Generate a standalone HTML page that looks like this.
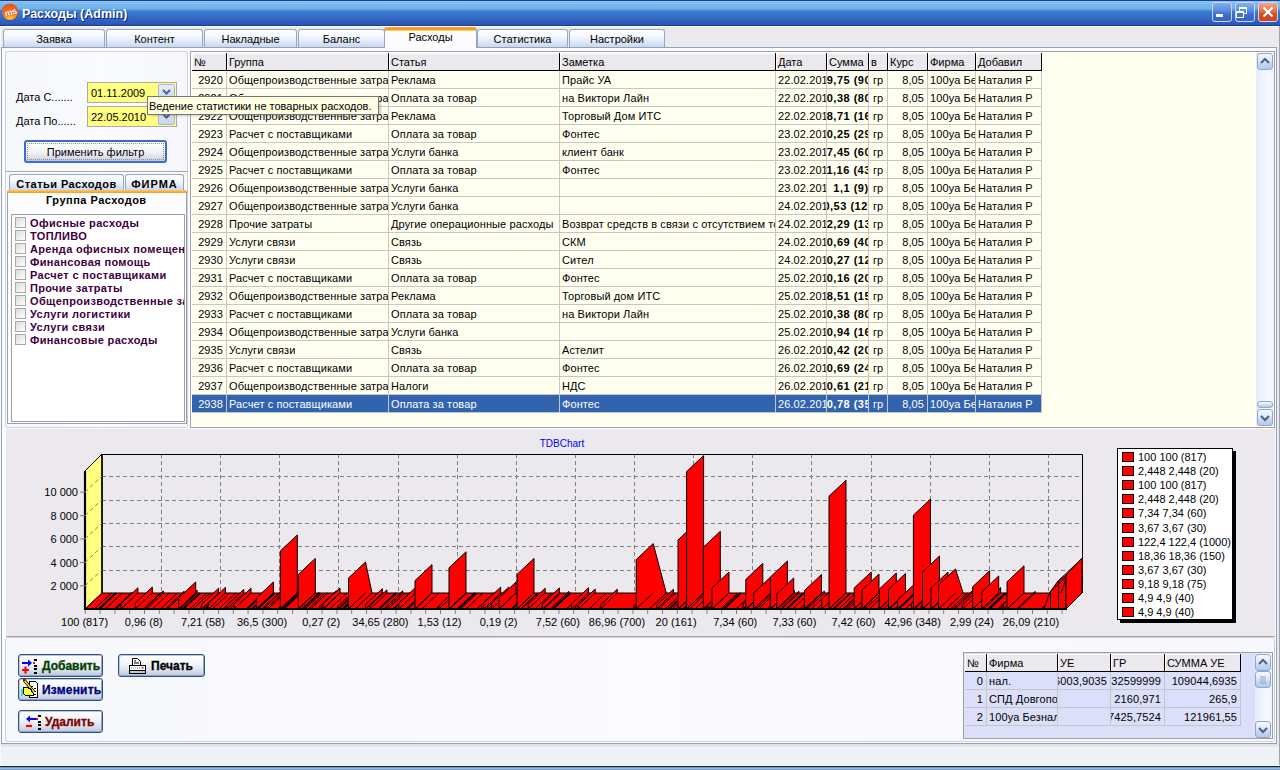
<!DOCTYPE html>
<html><head><meta charset="utf-8">
<style>
*{box-sizing:border-box;margin:0;padding:0}
html,body{width:1280px;height:770px;overflow:hidden;background:#EBE9ED;font-family:"Liberation Sans",sans-serif;font-size:11px;color:#000}
.a{position:absolute}
.t{position:absolute;white-space:pre;line-height:13px}
#title{left:0;top:0;width:1280px;height:26px;background:linear-gradient(#1E3C9E 0,#1E3C9E 1px,#9ACDF2 1px,#82C0EC 2px,#6FAEEA 9px,#5A94DE 10px,#3A7FD4 11px,#2C55B3 25px,#1C3B99 25px,#1C3B99 26px)}
.tab{position:absolute;top:29px;height:19px;border:1px solid #94A8C0;border-bottom:none;border-radius:3px 3px 0 0;background:linear-gradient(#FFFFFF,#F2F6FC 40%,#C5D5EC);text-align:center;line-height:19px}
.tabact{top:27px;height:21px;background:#FCFCFE;border-color:#94A8C0;border-top:3px solid #F3A02A;box-shadow:inset 0 1px 0 #FFC85A;line-height:15px;z-index:3}
#page{left:1px;top:47px;width:1276px;height:697px;border:1px solid #8FA3BD;background:#FCFCFE}
.btn{position:absolute;border:1px solid #3C5A8C;border-radius:3px;background:linear-gradient(#FFFFFF,#F4F4F8 50%,#D6DCE8 85%,#BFC8DA);text-align:center}
.hc{background:#EBE9ED;border-right:1px solid #000;border-bottom:1px solid #000;box-shadow:inset 1px 1px 0 #fff}
.rw{background:#FFFFF0;border-bottom:1px solid #C6C6C6}
.rw.sel{background:#3163AE;color:#fff}
.c{position:absolute;top:0;height:17px;line-height:19px;letter-spacing:0.1px;white-space:pre;overflow:hidden;padding-top:0}
.cs{display:flex;justify-content:center;font-weight:bold;letter-spacing:0.5px;padding-left:7px}
.vl{position:absolute;top:0;width:1px;height:18px;background:#C6C6C6}
.sbb{border:1px solid #8FA8D0;border-radius:3px;background:linear-gradient(#F6F9FE,#DDE8FA 45%,#C2D4F0 70%,#B6CAEA)}
.xb{border:1px solid #2F5283;border-radius:3px;box-shadow:inset 1px 1px 0 #B8C8E0,inset -1px -1px 0 #8FA4C8;background:linear-gradient(#FFFFFF,#F3F4F8 45%,#D9DFEA 75%,#B8C5DA)}
.wb{width:20px;height:20px;border:1px solid #C8D8F2;border-radius:3px;background:linear-gradient(#84B0EC,#5C8FE2 40%,#3F70D4 60%,#3563C8)}
</style></head><body>
<div id="title" class="a"></div>
<!-- app icon -->
<div class="a" style="left:2px;top:4px;width:16px;height:16px;border-radius:50%;background:radial-gradient(circle at 50% 85%,#FFD030 0,#F87020 45%,#E83A10 100%);box-shadow:0 0 1px #A03000"></div>
<svg class="a" style="left:2px;top:4px" width="16" height="16"><g transform="rotate(-15 8 8)"><text x="8.5" y="11.5" text-anchor="middle" font-size="9" font-weight="bold" font-family="Liberation Sans" fill="#fff" stroke="#D02000" stroke-width="0.6" paint-order="stroke" letter-spacing="-0.5">ms</text></g></svg>
<div class="t" style="left:22px;top:7px;font-size:12.5px;font-weight:bold;color:#fff;text-shadow:1px 1px 0 #0A1E6E;line-height:15px">Расходы (Admin)</div>
<!-- window buttons -->
<div class="a wb" style="left:1212px;top:2px"></div>
<div class="a" style="left:1216px;top:14px;width:7px;height:3px;background:#fff"></div>
<div class="a wb" style="left:1235px;top:2px"></div>
<div class="a" style="left:1239px;top:7px;width:8px;height:7px;border:1px solid #fff;border-top-width:2px"></div>
<div class="a" style="left:1236px;top:11px;width:8px;height:7px;border:1px solid #fff;border-top-width:2px;background:#3F73D8"></div>
<div class="a wb" style="left:1258px;top:2px;background:linear-gradient(#F3A488,#E8704A 45%,#D94F22 60%,#D04418)"></div>
<svg class="a" style="left:1258px;top:2px" width="20" height="20"><path d="M5.5 5.5L14.5 14.5M14.5 5.5L5.5 14.5" stroke="#fff" stroke-width="2.2"/></svg>
<div class="a" style="left:0;top:26px;width:1280px;height:1px;background:#fff"></div>

<!-- tabs -->
<div class="tab" style="left:3px;width:102px">Заявка</div>
<div class="tab" style="left:106px;width:97px">Контент</div>
<div class="tab" style="left:204px;width:93px">Накладные</div>
<div class="tab" style="left:298px;width:87px">Баланс</div>
<div class="tab" style="left:477px;width:91px">Статистика</div>
<div class="tab" style="left:569px;width:96px">Настройки</div>

<div id="page" class="a"></div>
<div class="tab tabact" style="left:384px;width:93px">Расходы</div>

<!-- left panel -->
<div class="a" style="left:5px;top:51px;width:183px;height:377px;border:1px solid #D2D2D6;border-radius:3px;background:linear-gradient(90deg,#F7F8FC,#FBFBFE 50%,#F7F8FC)"></div>
<div class="a" style="left:5px;top:51px;width:183px;height:121px;border:1px solid #D2D2D6;border-bottom-color:#A9A9AD;border-radius:3px 3px 0 0;background:linear-gradient(90deg,#F6F7FB,#FAFBFE 50%,#F6F7FB)"></div>
<div class="t" style="left:16px;top:91px">Дата С.......</div>
<div class="t" style="left:16px;top:115px">Дата По......</div>
<div class="a" style="left:87px;top:82px;width:90px;height:21px;border:1px solid #A9A9AD;background:#FFFF80"></div>
<div class="t" style="left:91px;top:87px">01.11.2009</div>
<div class="a" style="left:158px;top:84px;width:17px;height:17px;border:1px solid #A4B8DC;border-radius:2px;background:linear-gradient(#E6EEFC,#C4D4EE)"></div>
<svg class="a" style="left:158px;top:84px" width="17" height="17"><path d="M5 6L8.5 9.5L12 6" stroke="#4D6185" stroke-width="2" fill="none"/></svg>
<div class="a" style="left:87px;top:106px;width:90px;height:21px;border:1px solid #A9A9AD;background:#FFFF80"></div>
<div class="t" style="left:91px;top:111px">22.05.2010</div>
<div class="a" style="left:158px;top:108px;width:17px;height:17px;border:1px solid #A4B8DC;border-radius:2px;background:linear-gradient(#E6EEFC,#C4D4EE)"></div>
<svg class="a" style="left:158px;top:108px" width="17" height="17"><path d="M5 6L8.5 9.5L12 6" stroke="#4D6185" stroke-width="2" fill="none"/></svg>
<div class="btn" style="left:24px;top:140px;width:143px;height:23px;border:2px solid #3D6BC8;line-height:21px">Применить фильтр</div>
<div class="a" style="left:27px;top:143px;width:137px;height:17px;border:1px dotted #9C8F6A"></div>

<!-- sub tabs -->
<div class="tab" style="left:9px;top:174px;width:115px;height:17px;font-weight:bold;letter-spacing:0.45px;line-height:19px">Статьи Расходов</div>
<div class="tab" style="left:125px;top:174px;width:59px;height:17px;font-weight:bold;letter-spacing:1px;line-height:19px">ФИРМА</div>
<div class="a" style="left:7px;top:191px;width:180px;height:233px;border:1px solid #8FA3BD;border-top:none;background:#FCFCFE"></div>
<div class="a" style="left:7px;top:190px;width:181px;height:3px;background:linear-gradient(#FFC860,#F29A22);border-radius:2px 3px 0 0"></div>
<div class="t" style="left:46px;top:194px;font-weight:bold;letter-spacing:0.5px">Группа Расходов</div>
<div class="a" style="left:11px;top:214px;width:174px;height:208px;border:1px solid #A0A0A4;background:#fff;overflow:hidden">
 <div id="chk" class="a" style="left:0;top:0;width:172px"><div class="a" style="left:3px;top:2px;width:11px;height:11px;border:1px solid #A8A8A8;background:linear-gradient(135deg,#DCDCD8,#F4F4F2 70%,#FFFFFF)"></div><div class="t" style="left:18px;top:2px;font-weight:bold;color:#3D0040;letter-spacing:0.35px">Офисные расходы</div>
<div class="a" style="left:3px;top:15px;width:11px;height:11px;border:1px solid #A8A8A8;background:linear-gradient(135deg,#DCDCD8,#F4F4F2 70%,#FFFFFF)"></div><div class="t" style="left:18px;top:15px;font-weight:bold;color:#3D0040;letter-spacing:0.35px">ТОПЛИВО</div>
<div class="a" style="left:3px;top:28px;width:11px;height:11px;border:1px solid #A8A8A8;background:linear-gradient(135deg,#DCDCD8,#F4F4F2 70%,#FFFFFF)"></div><div class="t" style="left:18px;top:28px;font-weight:bold;color:#3D0040;letter-spacing:0.35px">Аренда офисных помещений</div>
<div class="a" style="left:3px;top:41px;width:11px;height:11px;border:1px solid #A8A8A8;background:linear-gradient(135deg,#DCDCD8,#F4F4F2 70%,#FFFFFF)"></div><div class="t" style="left:18px;top:41px;font-weight:bold;color:#3D0040;letter-spacing:0.35px">Финансовая помощь</div>
<div class="a" style="left:3px;top:54px;width:11px;height:11px;border:1px solid #A8A8A8;background:linear-gradient(135deg,#DCDCD8,#F4F4F2 70%,#FFFFFF)"></div><div class="t" style="left:18px;top:54px;font-weight:bold;color:#3D0040;letter-spacing:0.35px">Расчет с поставщиками</div>
<div class="a" style="left:3px;top:67px;width:11px;height:11px;border:1px solid #A8A8A8;background:linear-gradient(135deg,#DCDCD8,#F4F4F2 70%,#FFFFFF)"></div><div class="t" style="left:18px;top:67px;font-weight:bold;color:#3D0040;letter-spacing:0.35px">Прочие затраты</div>
<div class="a" style="left:3px;top:80px;width:11px;height:11px;border:1px solid #A8A8A8;background:linear-gradient(135deg,#DCDCD8,#F4F4F2 70%,#FFFFFF)"></div><div class="t" style="left:18px;top:80px;font-weight:bold;color:#3D0040;letter-spacing:0.35px">Общепроизводственные затраты</div>
<div class="a" style="left:3px;top:93px;width:11px;height:11px;border:1px solid #A8A8A8;background:linear-gradient(135deg,#DCDCD8,#F4F4F2 70%,#FFFFFF)"></div><div class="t" style="left:18px;top:93px;font-weight:bold;color:#3D0040;letter-spacing:0.35px">Услуги логистики</div>
<div class="a" style="left:3px;top:106px;width:11px;height:11px;border:1px solid #A8A8A8;background:linear-gradient(135deg,#DCDCD8,#F4F4F2 70%,#FFFFFF)"></div><div class="t" style="left:18px;top:106px;font-weight:bold;color:#3D0040;letter-spacing:0.35px">Услуги связи</div>
<div class="a" style="left:3px;top:119px;width:11px;height:11px;border:1px solid #A8A8A8;background:linear-gradient(135deg,#DCDCD8,#F4F4F2 70%,#FFFFFF)"></div><div class="t" style="left:18px;top:119px;font-weight:bold;color:#3D0040;letter-spacing:0.35px">Финансовые расходы</div>
</div>
</div>


<!-- main grid -->
<div class="a" style="left:190px;top:51px;width:1085px;height:377px;border:1px solid #A0A0A4;background:#FFFFF0;overflow:hidden">
<div class="a" style="left:0;top:0;width:1083px;height:1px;background:#fff"></div>
<div class="a" style="left:0;top:0;width:1px;height:375px;background:#fff"></div>
<div class="a" style="left:0;top:374px;width:1083px;height:1px;background:#fff"></div>
<!--GRID-->
<div class="a hc" style="left:1px;top:1px;width:35px;height:18px"><span class="t" style="left:2px;top:3px">№</span></div>
<div class="a hc" style="left:36px;top:1px;width:162px;height:18px"><span class="t" style="left:2px;top:3px">Группа</span></div>
<div class="a hc" style="left:198px;top:1px;width:171px;height:18px"><span class="t" style="left:2px;top:3px">Статья</span></div>
<div class="a hc" style="left:369px;top:1px;width:216px;height:18px"><span class="t" style="left:2px;top:3px">Заметка</span></div>
<div class="a hc" style="left:585px;top:1px;width:51px;height:18px"><span class="t" style="left:2px;top:3px">Дата</span></div>
<div class="a hc" style="left:636px;top:1px;width:42px;height:18px"><span class="t" style="left:2px;top:3px">Сумма</span></div>
<div class="a hc" style="left:678px;top:1px;width:19px;height:18px"><span class="t" style="left:2px;top:3px">в</span></div>
<div class="a hc" style="left:697px;top:1px;width:40px;height:18px"><span class="t" style="left:2px;top:3px">Курс</span></div>
<div class="a hc" style="left:737px;top:1px;width:48px;height:18px"><span class="t" style="left:2px;top:3px">Фирма</span></div>
<div class="a hc" style="left:785px;top:1px;width:66px;height:18px"><span class="t" style="left:2px;top:3px">Добавил</span></div>
<div class="a rw" style="left:1px;top:19px;width:850px;height:18px">
<div class="c" style="left:0px;width:34px;text-align:right;padding-right:3px">2920</div>
<div class="vl" style="left:34px"></div>
<div class="c" style="left:35px;width:161px;padding-left:2px">Общепроизводственные затраты</div>
<div class="vl" style="left:196px"></div>
<div class="c" style="left:197px;width:170px;padding-left:2px">Реклама</div>
<div class="vl" style="left:367px"></div>
<div class="c" style="left:368px;width:215px;padding-left:2px">Прайс УА</div>
<div class="vl" style="left:583px"></div>
<div class="c" style="left:584px;width:50px;padding-left:2px">22.02.2010</div>
<div class="vl" style="left:634px"></div>
<div class="c cs" style="left:635px;width:41px">19,75 (900)</div>
<div class="vl" style="left:676px"></div>
<div class="c" style="left:677px;width:18px;padding-left:4px">гр</div>
<div class="vl" style="left:695px"></div>
<div class="c" style="left:696px;width:39px;text-align:right;padding-right:3px">8,05</div>
<div class="vl" style="left:735px"></div>
<div class="c" style="left:736px;width:47px;padding-left:2px">100уа Безнал</div>
<div class="vl" style="left:783px"></div>
<div class="c" style="left:784px;width:65px;padding-left:2px">Наталия Р</div>
<div class="vl" style="left:849px"></div>
</div>
<div class="a rw" style="left:1px;top:37px;width:850px;height:18px">
<div class="c" style="left:0px;width:34px;text-align:right;padding-right:3px">2921</div>
<div class="vl" style="left:34px"></div>
<div class="c" style="left:35px;width:161px;padding-left:2px">Общепроизводственные затраты</div>
<div class="vl" style="left:196px"></div>
<div class="c" style="left:197px;width:170px;padding-left:2px">Оплата за товар</div>
<div class="vl" style="left:367px"></div>
<div class="c" style="left:368px;width:215px;padding-left:2px">на Виктори Лайн</div>
<div class="vl" style="left:583px"></div>
<div class="c" style="left:584px;width:50px;padding-left:2px">22.02.2010</div>
<div class="vl" style="left:634px"></div>
<div class="c cs" style="left:635px;width:41px">10,38 (800)</div>
<div class="vl" style="left:676px"></div>
<div class="c" style="left:677px;width:18px;padding-left:4px">гр</div>
<div class="vl" style="left:695px"></div>
<div class="c" style="left:696px;width:39px;text-align:right;padding-right:3px">8,05</div>
<div class="vl" style="left:735px"></div>
<div class="c" style="left:736px;width:47px;padding-left:2px">100уа Безнал</div>
<div class="vl" style="left:783px"></div>
<div class="c" style="left:784px;width:65px;padding-left:2px">Наталия Р</div>
<div class="vl" style="left:849px"></div>
</div>
<div class="a rw" style="left:1px;top:55px;width:850px;height:18px">
<div class="c" style="left:0px;width:34px;text-align:right;padding-right:3px">2922</div>
<div class="vl" style="left:34px"></div>
<div class="c" style="left:35px;width:161px;padding-left:2px">Общепроизводственные затраты</div>
<div class="vl" style="left:196px"></div>
<div class="c" style="left:197px;width:170px;padding-left:2px">Реклама</div>
<div class="vl" style="left:367px"></div>
<div class="c" style="left:368px;width:215px;padding-left:2px">Торговый Дом ИТС</div>
<div class="vl" style="left:583px"></div>
<div class="c" style="left:584px;width:50px;padding-left:2px">22.02.2010</div>
<div class="vl" style="left:634px"></div>
<div class="c cs" style="left:635px;width:41px">18,71 (160)</div>
<div class="vl" style="left:676px"></div>
<div class="c" style="left:677px;width:18px;padding-left:4px">гр</div>
<div class="vl" style="left:695px"></div>
<div class="c" style="left:696px;width:39px;text-align:right;padding-right:3px">8,05</div>
<div class="vl" style="left:735px"></div>
<div class="c" style="left:736px;width:47px;padding-left:2px">100уа Безнал</div>
<div class="vl" style="left:783px"></div>
<div class="c" style="left:784px;width:65px;padding-left:2px">Наталия Р</div>
<div class="vl" style="left:849px"></div>
</div>
<div class="a rw" style="left:1px;top:73px;width:850px;height:18px">
<div class="c" style="left:0px;width:34px;text-align:right;padding-right:3px">2923</div>
<div class="vl" style="left:34px"></div>
<div class="c" style="left:35px;width:161px;padding-left:2px">Расчет с поставщиками</div>
<div class="vl" style="left:196px"></div>
<div class="c" style="left:197px;width:170px;padding-left:2px">Оплата за товар</div>
<div class="vl" style="left:367px"></div>
<div class="c" style="left:368px;width:215px;padding-left:2px">Фонтес</div>
<div class="vl" style="left:583px"></div>
<div class="c" style="left:584px;width:50px;padding-left:2px">23.02.2010</div>
<div class="vl" style="left:634px"></div>
<div class="c cs" style="left:635px;width:41px">10,25 (290)</div>
<div class="vl" style="left:676px"></div>
<div class="c" style="left:677px;width:18px;padding-left:4px">гр</div>
<div class="vl" style="left:695px"></div>
<div class="c" style="left:696px;width:39px;text-align:right;padding-right:3px">8,05</div>
<div class="vl" style="left:735px"></div>
<div class="c" style="left:736px;width:47px;padding-left:2px">100уа Безнал</div>
<div class="vl" style="left:783px"></div>
<div class="c" style="left:784px;width:65px;padding-left:2px">Наталия Р</div>
<div class="vl" style="left:849px"></div>
</div>
<div class="a rw" style="left:1px;top:91px;width:850px;height:18px">
<div class="c" style="left:0px;width:34px;text-align:right;padding-right:3px">2924</div>
<div class="vl" style="left:34px"></div>
<div class="c" style="left:35px;width:161px;padding-left:2px">Общепроизводственные затраты</div>
<div class="vl" style="left:196px"></div>
<div class="c" style="left:197px;width:170px;padding-left:2px">Услуги банка</div>
<div class="vl" style="left:367px"></div>
<div class="c" style="left:368px;width:215px;padding-left:2px">клиент банк</div>
<div class="vl" style="left:583px"></div>
<div class="c" style="left:584px;width:50px;padding-left:2px">23.02.2010</div>
<div class="vl" style="left:634px"></div>
<div class="c cs" style="left:635px;width:41px">77,45 (600)</div>
<div class="vl" style="left:676px"></div>
<div class="c" style="left:677px;width:18px;padding-left:4px">гр</div>
<div class="vl" style="left:695px"></div>
<div class="c" style="left:696px;width:39px;text-align:right;padding-right:3px">8,05</div>
<div class="vl" style="left:735px"></div>
<div class="c" style="left:736px;width:47px;padding-left:2px">100уа Безнал</div>
<div class="vl" style="left:783px"></div>
<div class="c" style="left:784px;width:65px;padding-left:2px">Наталия Р</div>
<div class="vl" style="left:849px"></div>
</div>
<div class="a rw" style="left:1px;top:109px;width:850px;height:18px">
<div class="c" style="left:0px;width:34px;text-align:right;padding-right:3px">2925</div>
<div class="vl" style="left:34px"></div>
<div class="c" style="left:35px;width:161px;padding-left:2px">Расчет с поставщиками</div>
<div class="vl" style="left:196px"></div>
<div class="c" style="left:197px;width:170px;padding-left:2px">Оплата за товар</div>
<div class="vl" style="left:367px"></div>
<div class="c" style="left:368px;width:215px;padding-left:2px">Фонтес</div>
<div class="vl" style="left:583px"></div>
<div class="c" style="left:584px;width:50px;padding-left:2px">23.02.2010</div>
<div class="vl" style="left:634px"></div>
<div class="c cs" style="left:635px;width:41px">11,16 (430)</div>
<div class="vl" style="left:676px"></div>
<div class="c" style="left:677px;width:18px;padding-left:4px">гр</div>
<div class="vl" style="left:695px"></div>
<div class="c" style="left:696px;width:39px;text-align:right;padding-right:3px">8,05</div>
<div class="vl" style="left:735px"></div>
<div class="c" style="left:736px;width:47px;padding-left:2px">100уа Безнал</div>
<div class="vl" style="left:783px"></div>
<div class="c" style="left:784px;width:65px;padding-left:2px">Наталия Р</div>
<div class="vl" style="left:849px"></div>
</div>
<div class="a rw" style="left:1px;top:127px;width:850px;height:18px">
<div class="c" style="left:0px;width:34px;text-align:right;padding-right:3px">2926</div>
<div class="vl" style="left:34px"></div>
<div class="c" style="left:35px;width:161px;padding-left:2px">Общепроизводственные затраты</div>
<div class="vl" style="left:196px"></div>
<div class="c" style="left:197px;width:170px;padding-left:2px">Услуги банка</div>
<div class="vl" style="left:367px"></div>
<div class="c" style="left:368px;width:215px;padding-left:2px"></div>
<div class="vl" style="left:583px"></div>
<div class="c" style="left:584px;width:50px;padding-left:2px">23.02.2010</div>
<div class="vl" style="left:634px"></div>
<div class="c cs" style="left:635px;width:41px">1,1 (9)</div>
<div class="vl" style="left:676px"></div>
<div class="c" style="left:677px;width:18px;padding-left:4px">гр</div>
<div class="vl" style="left:695px"></div>
<div class="c" style="left:696px;width:39px;text-align:right;padding-right:3px">8,05</div>
<div class="vl" style="left:735px"></div>
<div class="c" style="left:736px;width:47px;padding-left:2px">100уа Безнал</div>
<div class="vl" style="left:783px"></div>
<div class="c" style="left:784px;width:65px;padding-left:2px">Наталия Р</div>
<div class="vl" style="left:849px"></div>
</div>
<div class="a rw" style="left:1px;top:145px;width:850px;height:18px">
<div class="c" style="left:0px;width:34px;text-align:right;padding-right:3px">2927</div>
<div class="vl" style="left:34px"></div>
<div class="c" style="left:35px;width:161px;padding-left:2px">Общепроизводственные затраты</div>
<div class="vl" style="left:196px"></div>
<div class="c" style="left:197px;width:170px;padding-left:2px">Услуги банка</div>
<div class="vl" style="left:367px"></div>
<div class="c" style="left:368px;width:215px;padding-left:2px"></div>
<div class="vl" style="left:583px"></div>
<div class="c" style="left:584px;width:50px;padding-left:2px">24.02.2010</div>
<div class="vl" style="left:634px"></div>
<div class="c cs" style="left:635px;width:41px">0,53 (120)</div>
<div class="vl" style="left:676px"></div>
<div class="c" style="left:677px;width:18px;padding-left:4px">гр</div>
<div class="vl" style="left:695px"></div>
<div class="c" style="left:696px;width:39px;text-align:right;padding-right:3px">8,05</div>
<div class="vl" style="left:735px"></div>
<div class="c" style="left:736px;width:47px;padding-left:2px">100уа Безнал</div>
<div class="vl" style="left:783px"></div>
<div class="c" style="left:784px;width:65px;padding-left:2px">Наталия Р</div>
<div class="vl" style="left:849px"></div>
</div>
<div class="a rw" style="left:1px;top:163px;width:850px;height:18px">
<div class="c" style="left:0px;width:34px;text-align:right;padding-right:3px">2928</div>
<div class="vl" style="left:34px"></div>
<div class="c" style="left:35px;width:161px;padding-left:2px">Прочие затраты</div>
<div class="vl" style="left:196px"></div>
<div class="c" style="left:197px;width:170px;padding-left:2px">Другие операционные расходы</div>
<div class="vl" style="left:367px"></div>
<div class="c" style="left:368px;width:215px;padding-left:2px">Возврат средств в связи с отсутствием товара</div>
<div class="vl" style="left:583px"></div>
<div class="c" style="left:584px;width:50px;padding-left:2px">24.02.2010</div>
<div class="vl" style="left:634px"></div>
<div class="c cs" style="left:635px;width:41px">12,29 (130)</div>
<div class="vl" style="left:676px"></div>
<div class="c" style="left:677px;width:18px;padding-left:4px">гр</div>
<div class="vl" style="left:695px"></div>
<div class="c" style="left:696px;width:39px;text-align:right;padding-right:3px">8,05</div>
<div class="vl" style="left:735px"></div>
<div class="c" style="left:736px;width:47px;padding-left:2px">100уа Безнал</div>
<div class="vl" style="left:783px"></div>
<div class="c" style="left:784px;width:65px;padding-left:2px">Наталия Р</div>
<div class="vl" style="left:849px"></div>
</div>
<div class="a rw" style="left:1px;top:181px;width:850px;height:18px">
<div class="c" style="left:0px;width:34px;text-align:right;padding-right:3px">2929</div>
<div class="vl" style="left:34px"></div>
<div class="c" style="left:35px;width:161px;padding-left:2px">Услуги связи</div>
<div class="vl" style="left:196px"></div>
<div class="c" style="left:197px;width:170px;padding-left:2px">Связь</div>
<div class="vl" style="left:367px"></div>
<div class="c" style="left:368px;width:215px;padding-left:2px">СКМ</div>
<div class="vl" style="left:583px"></div>
<div class="c" style="left:584px;width:50px;padding-left:2px">24.02.2010</div>
<div class="vl" style="left:634px"></div>
<div class="c cs" style="left:635px;width:41px">10,69 (400)</div>
<div class="vl" style="left:676px"></div>
<div class="c" style="left:677px;width:18px;padding-left:4px">гр</div>
<div class="vl" style="left:695px"></div>
<div class="c" style="left:696px;width:39px;text-align:right;padding-right:3px">8,05</div>
<div class="vl" style="left:735px"></div>
<div class="c" style="left:736px;width:47px;padding-left:2px">100уа Безнал</div>
<div class="vl" style="left:783px"></div>
<div class="c" style="left:784px;width:65px;padding-left:2px">Наталия Р</div>
<div class="vl" style="left:849px"></div>
</div>
<div class="a rw" style="left:1px;top:199px;width:850px;height:18px">
<div class="c" style="left:0px;width:34px;text-align:right;padding-right:3px">2930</div>
<div class="vl" style="left:34px"></div>
<div class="c" style="left:35px;width:161px;padding-left:2px">Услуги связи</div>
<div class="vl" style="left:196px"></div>
<div class="c" style="left:197px;width:170px;padding-left:2px">Связь</div>
<div class="vl" style="left:367px"></div>
<div class="c" style="left:368px;width:215px;padding-left:2px">Сител</div>
<div class="vl" style="left:583px"></div>
<div class="c" style="left:584px;width:50px;padding-left:2px">24.02.2010</div>
<div class="vl" style="left:634px"></div>
<div class="c cs" style="left:635px;width:41px">10,27 (120)</div>
<div class="vl" style="left:676px"></div>
<div class="c" style="left:677px;width:18px;padding-left:4px">гр</div>
<div class="vl" style="left:695px"></div>
<div class="c" style="left:696px;width:39px;text-align:right;padding-right:3px">8,05</div>
<div class="vl" style="left:735px"></div>
<div class="c" style="left:736px;width:47px;padding-left:2px">100уа Безнал</div>
<div class="vl" style="left:783px"></div>
<div class="c" style="left:784px;width:65px;padding-left:2px">Наталия Р</div>
<div class="vl" style="left:849px"></div>
</div>
<div class="a rw" style="left:1px;top:217px;width:850px;height:18px">
<div class="c" style="left:0px;width:34px;text-align:right;padding-right:3px">2931</div>
<div class="vl" style="left:34px"></div>
<div class="c" style="left:35px;width:161px;padding-left:2px">Расчет с поставщиками</div>
<div class="vl" style="left:196px"></div>
<div class="c" style="left:197px;width:170px;padding-left:2px">Оплата за товар</div>
<div class="vl" style="left:367px"></div>
<div class="c" style="left:368px;width:215px;padding-left:2px">Фонтес</div>
<div class="vl" style="left:583px"></div>
<div class="c" style="left:584px;width:50px;padding-left:2px">25.02.2010</div>
<div class="vl" style="left:634px"></div>
<div class="c cs" style="left:635px;width:41px">10,16 (200)</div>
<div class="vl" style="left:676px"></div>
<div class="c" style="left:677px;width:18px;padding-left:4px">гр</div>
<div class="vl" style="left:695px"></div>
<div class="c" style="left:696px;width:39px;text-align:right;padding-right:3px">8,05</div>
<div class="vl" style="left:735px"></div>
<div class="c" style="left:736px;width:47px;padding-left:2px">100уа Безнал</div>
<div class="vl" style="left:783px"></div>
<div class="c" style="left:784px;width:65px;padding-left:2px">Наталия Р</div>
<div class="vl" style="left:849px"></div>
</div>
<div class="a rw" style="left:1px;top:235px;width:850px;height:18px">
<div class="c" style="left:0px;width:34px;text-align:right;padding-right:3px">2932</div>
<div class="vl" style="left:34px"></div>
<div class="c" style="left:35px;width:161px;padding-left:2px">Общепроизводственные затраты</div>
<div class="vl" style="left:196px"></div>
<div class="c" style="left:197px;width:170px;padding-left:2px">Реклама</div>
<div class="vl" style="left:367px"></div>
<div class="c" style="left:368px;width:215px;padding-left:2px">Торговый дом ИТС</div>
<div class="vl" style="left:583px"></div>
<div class="c" style="left:584px;width:50px;padding-left:2px">25.02.2010</div>
<div class="vl" style="left:634px"></div>
<div class="c cs" style="left:635px;width:41px">18,51 (150)</div>
<div class="vl" style="left:676px"></div>
<div class="c" style="left:677px;width:18px;padding-left:4px">гр</div>
<div class="vl" style="left:695px"></div>
<div class="c" style="left:696px;width:39px;text-align:right;padding-right:3px">8,05</div>
<div class="vl" style="left:735px"></div>
<div class="c" style="left:736px;width:47px;padding-left:2px">100уа Безнал</div>
<div class="vl" style="left:783px"></div>
<div class="c" style="left:784px;width:65px;padding-left:2px">Наталия Р</div>
<div class="vl" style="left:849px"></div>
</div>
<div class="a rw" style="left:1px;top:253px;width:850px;height:18px">
<div class="c" style="left:0px;width:34px;text-align:right;padding-right:3px">2933</div>
<div class="vl" style="left:34px"></div>
<div class="c" style="left:35px;width:161px;padding-left:2px">Расчет с поставщиками</div>
<div class="vl" style="left:196px"></div>
<div class="c" style="left:197px;width:170px;padding-left:2px">Оплата за товар</div>
<div class="vl" style="left:367px"></div>
<div class="c" style="left:368px;width:215px;padding-left:2px">на Виктори Лайн</div>
<div class="vl" style="left:583px"></div>
<div class="c" style="left:584px;width:50px;padding-left:2px">25.02.2010</div>
<div class="vl" style="left:634px"></div>
<div class="c cs" style="left:635px;width:41px">10,38 (800)</div>
<div class="vl" style="left:676px"></div>
<div class="c" style="left:677px;width:18px;padding-left:4px">гр</div>
<div class="vl" style="left:695px"></div>
<div class="c" style="left:696px;width:39px;text-align:right;padding-right:3px">8,05</div>
<div class="vl" style="left:735px"></div>
<div class="c" style="left:736px;width:47px;padding-left:2px">100уа Безнал</div>
<div class="vl" style="left:783px"></div>
<div class="c" style="left:784px;width:65px;padding-left:2px">Наталия Р</div>
<div class="vl" style="left:849px"></div>
</div>
<div class="a rw" style="left:1px;top:271px;width:850px;height:18px">
<div class="c" style="left:0px;width:34px;text-align:right;padding-right:3px">2934</div>
<div class="vl" style="left:34px"></div>
<div class="c" style="left:35px;width:161px;padding-left:2px">Общепроизводственные затраты</div>
<div class="vl" style="left:196px"></div>
<div class="c" style="left:197px;width:170px;padding-left:2px">Услуги банка</div>
<div class="vl" style="left:367px"></div>
<div class="c" style="left:368px;width:215px;padding-left:2px"></div>
<div class="vl" style="left:583px"></div>
<div class="c" style="left:584px;width:50px;padding-left:2px">25.02.2010</div>
<div class="vl" style="left:634px"></div>
<div class="c cs" style="left:635px;width:41px">10,94 (160)</div>
<div class="vl" style="left:676px"></div>
<div class="c" style="left:677px;width:18px;padding-left:4px">гр</div>
<div class="vl" style="left:695px"></div>
<div class="c" style="left:696px;width:39px;text-align:right;padding-right:3px">8,05</div>
<div class="vl" style="left:735px"></div>
<div class="c" style="left:736px;width:47px;padding-left:2px">100уа Безнал</div>
<div class="vl" style="left:783px"></div>
<div class="c" style="left:784px;width:65px;padding-left:2px">Наталия Р</div>
<div class="vl" style="left:849px"></div>
</div>
<div class="a rw" style="left:1px;top:289px;width:850px;height:18px">
<div class="c" style="left:0px;width:34px;text-align:right;padding-right:3px">2935</div>
<div class="vl" style="left:34px"></div>
<div class="c" style="left:35px;width:161px;padding-left:2px">Услуги связи</div>
<div class="vl" style="left:196px"></div>
<div class="c" style="left:197px;width:170px;padding-left:2px">Связь</div>
<div class="vl" style="left:367px"></div>
<div class="c" style="left:368px;width:215px;padding-left:2px">Астелит</div>
<div class="vl" style="left:583px"></div>
<div class="c" style="left:584px;width:50px;padding-left:2px">26.02.2010</div>
<div class="vl" style="left:634px"></div>
<div class="c cs" style="left:635px;width:41px">10,42 (200)</div>
<div class="vl" style="left:676px"></div>
<div class="c" style="left:677px;width:18px;padding-left:4px">гр</div>
<div class="vl" style="left:695px"></div>
<div class="c" style="left:696px;width:39px;text-align:right;padding-right:3px">8,05</div>
<div class="vl" style="left:735px"></div>
<div class="c" style="left:736px;width:47px;padding-left:2px">100уа Безнал</div>
<div class="vl" style="left:783px"></div>
<div class="c" style="left:784px;width:65px;padding-left:2px">Наталия Р</div>
<div class="vl" style="left:849px"></div>
</div>
<div class="a rw" style="left:1px;top:307px;width:850px;height:18px">
<div class="c" style="left:0px;width:34px;text-align:right;padding-right:3px">2936</div>
<div class="vl" style="left:34px"></div>
<div class="c" style="left:35px;width:161px;padding-left:2px">Расчет с поставщиками</div>
<div class="vl" style="left:196px"></div>
<div class="c" style="left:197px;width:170px;padding-left:2px">Оплата за товар</div>
<div class="vl" style="left:367px"></div>
<div class="c" style="left:368px;width:215px;padding-left:2px">Фонтес</div>
<div class="vl" style="left:583px"></div>
<div class="c" style="left:584px;width:50px;padding-left:2px">26.02.2010</div>
<div class="vl" style="left:634px"></div>
<div class="c cs" style="left:635px;width:41px">10,69 (240)</div>
<div class="vl" style="left:676px"></div>
<div class="c" style="left:677px;width:18px;padding-left:4px">гр</div>
<div class="vl" style="left:695px"></div>
<div class="c" style="left:696px;width:39px;text-align:right;padding-right:3px">8,05</div>
<div class="vl" style="left:735px"></div>
<div class="c" style="left:736px;width:47px;padding-left:2px">100уа Безнал</div>
<div class="vl" style="left:783px"></div>
<div class="c" style="left:784px;width:65px;padding-left:2px">Наталия Р</div>
<div class="vl" style="left:849px"></div>
</div>
<div class="a rw" style="left:1px;top:325px;width:850px;height:18px">
<div class="c" style="left:0px;width:34px;text-align:right;padding-right:3px">2937</div>
<div class="vl" style="left:34px"></div>
<div class="c" style="left:35px;width:161px;padding-left:2px">Общепроизводственные затраты</div>
<div class="vl" style="left:196px"></div>
<div class="c" style="left:197px;width:170px;padding-left:2px">Налоги</div>
<div class="vl" style="left:367px"></div>
<div class="c" style="left:368px;width:215px;padding-left:2px">НДС</div>
<div class="vl" style="left:583px"></div>
<div class="c" style="left:584px;width:50px;padding-left:2px">26.02.2010</div>
<div class="vl" style="left:634px"></div>
<div class="c cs" style="left:635px;width:41px">10,61 (210)</div>
<div class="vl" style="left:676px"></div>
<div class="c" style="left:677px;width:18px;padding-left:4px">гр</div>
<div class="vl" style="left:695px"></div>
<div class="c" style="left:696px;width:39px;text-align:right;padding-right:3px">8,05</div>
<div class="vl" style="left:735px"></div>
<div class="c" style="left:736px;width:47px;padding-left:2px">100уа Безнал</div>
<div class="vl" style="left:783px"></div>
<div class="c" style="left:784px;width:65px;padding-left:2px">Наталия Р</div>
<div class="vl" style="left:849px"></div>
</div>
<div class="a rw sel" style="left:1px;top:343px;width:850px;height:18px">
<div class="c" style="left:0px;width:34px;text-align:right;padding-right:3px">2938</div>
<div class="vl" style="left:34px"></div>
<div class="c" style="left:35px;width:161px;padding-left:2px">Расчет с поставщиками</div>
<div class="vl" style="left:196px"></div>
<div class="c" style="left:197px;width:170px;padding-left:2px">Оплата за товар</div>
<div class="vl" style="left:367px"></div>
<div class="c" style="left:368px;width:215px;padding-left:2px">Фонтес</div>
<div class="vl" style="left:583px"></div>
<div class="c" style="left:584px;width:50px;padding-left:2px">26.02.2010</div>
<div class="vl" style="left:634px"></div>
<div class="c cs" style="left:635px;width:41px">10,78 (350)</div>
<div class="vl" style="left:676px"></div>
<div class="c" style="left:677px;width:18px;padding-left:4px">гр</div>
<div class="vl" style="left:695px"></div>
<div class="c" style="left:696px;width:39px;text-align:right;padding-right:3px">8,05</div>
<div class="vl" style="left:735px"></div>
<div class="c" style="left:736px;width:47px;padding-left:2px">100уа Безнал</div>
<div class="vl" style="left:783px"></div>
<div class="c" style="left:784px;width:65px;padding-left:2px">Наталия Р</div>
<div class="vl" style="left:849px"></div>
</div>
<!--/GRID-->
</div>

<!-- grid scrollbar -->
<div class="a" style="left:1256px;top:53px;width:18px;height:373px;background:linear-gradient(90deg,#E4EDFB,#F6F9FE 70%,#F0F4FC)"></div>
<div class="a sbb" style="left:1257px;top:53px;width:16px;height:17px"></div>
<svg class="a" style="left:1257px;top:53px" width="16" height="17"><path d="M4 10L8 6L12 10" stroke="#4D6185" stroke-width="2" fill="none"/></svg>
<div class="a sbb" style="left:1257px;top:401px;width:16px;height:7px"></div>
<div class="a sbb" style="left:1257px;top:409px;width:16px;height:17px"></div>
<svg class="a" style="left:1257px;top:409px" width="16" height="17"><path d="M4 7L8 11L12 7" stroke="#4D6185" stroke-width="2" fill="none"/></svg>

<!-- tooltip -->
<div class="a" style="left:149px;top:98px;width:232px;height:18px;background:rgba(0,0,0,0.18);filter:blur(1px)"></div>
<div class="a" style="left:147px;top:96px;width:232px;height:19px;border:1px solid #767676;background:#FFFFE1"></div>
<div class="t" style="left:149px;top:100px">Ведение статистики не товарных расходов.</div>

<!-- chart panel -->
<div class="a" style="left:6px;top:429px;width:1269px;height:208px;background:#EBE9ED;border-bottom:1px solid #A5A5A9"></div>
<!--CHART-->
<svg class="a" style="left:0;top:0" width="1280" height="770" viewBox="0 0 1280 770">
<line x1="102" y1="570.5" x2="1082" y2="570.5" stroke="#808080" stroke-dasharray="4,3" stroke-width="1"/>
<line x1="102" y1="546.5" x2="1082" y2="546.5" stroke="#808080" stroke-dasharray="4,3" stroke-width="1"/>
<line x1="102" y1="523.5" x2="1082" y2="523.5" stroke="#808080" stroke-dasharray="4,3" stroke-width="1"/>
<line x1="102" y1="500.5" x2="1082" y2="500.5" stroke="#808080" stroke-dasharray="4,3" stroke-width="1"/>
<line x1="102" y1="476.5" x2="1082" y2="476.5" stroke="#808080" stroke-dasharray="4,3" stroke-width="1"/>
<line x1="161.5" y1="454" x2="161.5" y2="593" stroke="#808080" stroke-dasharray="4,3" stroke-width="1"/>
<line x1="220.5" y1="454" x2="220.5" y2="593" stroke="#808080" stroke-dasharray="4,3" stroke-width="1"/>
<line x1="279.5" y1="454" x2="279.5" y2="593" stroke="#808080" stroke-dasharray="4,3" stroke-width="1"/>
<line x1="338.5" y1="454" x2="338.5" y2="593" stroke="#808080" stroke-dasharray="4,3" stroke-width="1"/>
<line x1="398.5" y1="454" x2="398.5" y2="593" stroke="#808080" stroke-dasharray="4,3" stroke-width="1"/>
<line x1="457.5" y1="454" x2="457.5" y2="593" stroke="#808080" stroke-dasharray="4,3" stroke-width="1"/>
<line x1="516.5" y1="454" x2="516.5" y2="593" stroke="#808080" stroke-dasharray="4,3" stroke-width="1"/>
<line x1="575.5" y1="454" x2="575.5" y2="593" stroke="#808080" stroke-dasharray="4,3" stroke-width="1"/>
<line x1="634.5" y1="454" x2="634.5" y2="593" stroke="#808080" stroke-dasharray="4,3" stroke-width="1"/>
<line x1="693.5" y1="454" x2="693.5" y2="593" stroke="#808080" stroke-dasharray="4,3" stroke-width="1"/>
<line x1="752.5" y1="454" x2="752.5" y2="593" stroke="#808080" stroke-dasharray="4,3" stroke-width="1"/>
<line x1="811.5" y1="454" x2="811.5" y2="593" stroke="#808080" stroke-dasharray="4,3" stroke-width="1"/>
<line x1="871.5" y1="454" x2="871.5" y2="593" stroke="#808080" stroke-dasharray="4,3" stroke-width="1"/>
<line x1="930.5" y1="454" x2="930.5" y2="593" stroke="#808080" stroke-dasharray="4,3" stroke-width="1"/>
<line x1="989.5" y1="454" x2="989.5" y2="593" stroke="#808080" stroke-dasharray="4,3" stroke-width="1"/>
<line x1="1048.5" y1="454" x2="1048.5" y2="593" stroke="#808080" stroke-dasharray="4,3" stroke-width="1"/>
<path d="M102 454.5H1082.5V593" stroke="#000" fill="none" stroke-width="1"/>
<polygon points="85,471 102,454 102,593 85,609" fill="#FFFF80" stroke="#000" stroke-width="1"/>
<line x1="85" y1="471" x2="85" y2="610" stroke="#000" stroke-width="2.2"/>
<line x1="102" y1="454" x2="102" y2="593" stroke="#000" stroke-width="1.5"/>
<line x1="85" y1="585.9" x2="102" y2="569.9" stroke="#808080" stroke-dasharray="4,3" stroke-width="1"/>
<line x1="80" y1="585.9" x2="85" y2="585.9" stroke="#808080" stroke-width="1"/>
<text x="78" y="589.9" text-anchor="end" font-size="11" font-family="Liberation Sans">2 000</text>
<line x1="85" y1="562.5" x2="102" y2="546.5" stroke="#808080" stroke-dasharray="4,3" stroke-width="1"/>
<line x1="80" y1="562.5" x2="85" y2="562.5" stroke="#808080" stroke-width="1"/>
<text x="78" y="566.5" text-anchor="end" font-size="11" font-family="Liberation Sans">4 000</text>
<line x1="85" y1="539.0" x2="102" y2="523.0" stroke="#808080" stroke-dasharray="4,3" stroke-width="1"/>
<line x1="80" y1="539.0" x2="85" y2="539.0" stroke="#808080" stroke-width="1"/>
<text x="78" y="543.0" text-anchor="end" font-size="11" font-family="Liberation Sans">6 000</text>
<line x1="85" y1="515.6" x2="102" y2="499.6" stroke="#808080" stroke-dasharray="4,3" stroke-width="1"/>
<line x1="80" y1="515.6" x2="85" y2="515.6" stroke="#808080" stroke-width="1"/>
<text x="78" y="519.6" text-anchor="end" font-size="11" font-family="Liberation Sans">8 000</text>
<line x1="85" y1="492.1" x2="102" y2="476.1" stroke="#808080" stroke-dasharray="4,3" stroke-width="1"/>
<line x1="80" y1="492.1" x2="85" y2="492.1" stroke="#808080" stroke-width="1"/>
<text x="78" y="496.1" text-anchor="end" font-size="11" font-family="Liberation Sans">10 000</text>
<polygon points="85,609 102,593 1082,593 1066,609" fill="#FF0000" stroke="#000" stroke-width="1"/>
<line x1="99.0" y1="609" x2="116.0" y2="593" stroke="#000" stroke-width="1.8"/>
<line x1="94.6" y1="609" x2="111.6" y2="593" stroke="#000" stroke-width="1"/>
<line x1="105.2" y1="609" x2="122.2" y2="593" stroke="#000" stroke-width="1"/>
<line x1="115.2" y1="609" x2="132.2" y2="593" stroke="#000" stroke-width="1.8"/>
<line x1="120.8" y1="609" x2="137.8" y2="593" stroke="#000" stroke-width="1"/>
<polygon points="120.9,609 120.9,603.8 137.9,587.8 137.9,593" fill="#FF0000" stroke="#000" stroke-width="1"/>
<line x1="143.4" y1="609" x2="160.4" y2="593" stroke="#000" stroke-width="1"/>
<polygon points="135.3,609 135.3,603.1 152.3,587.1 152.3,593" fill="#FF0000" stroke="#000" stroke-width="1"/>
<line x1="152.4" y1="609" x2="169.4" y2="593" stroke="#000" stroke-width="1"/>
<polygon points="146.3,609 146.3,607.0 163.3,591.0 163.3,593" fill="#FF0000" stroke="#000" stroke-width="1"/>
<line x1="167.3" y1="609" x2="184.3" y2="593" stroke="#000" stroke-width="1"/>
<line x1="160.5" y1="609" x2="177.5" y2="593" stroke="#000" stroke-width="1"/>
<polygon points="167.1,609 167.1,607.2 184.1,591.2 184.1,593" fill="#FF0000" stroke="#000" stroke-width="1"/>
<line x1="183.0" y1="609" x2="200.0" y2="593" stroke="#000" stroke-width="1.8"/>
<polygon points="180.1,609 180.1,606.1 197.1,590.1 197.1,593" fill="#FF0000" stroke="#000" stroke-width="1"/>
<line x1="202.3" y1="609" x2="219.3" y2="593" stroke="#000" stroke-width="1"/>
<line x1="193.0" y1="609" x2="210.0" y2="593" stroke="#000" stroke-width="1"/>
<line x1="198.9" y1="609" x2="215.9" y2="593" stroke="#000" stroke-width="1"/>
<line x1="189.8" y1="609" x2="206.8" y2="593" stroke="#000" stroke-width="1"/>
<polygon points="201.6,609 201.6,604.2 218.6,588.2 218.6,593" fill="#FF0000" stroke="#000" stroke-width="1"/>
<line x1="212.4" y1="609" x2="229.4" y2="593" stroke="#000" stroke-width="1"/>
<line x1="205.1" y1="609" x2="222.1" y2="593" stroke="#000" stroke-width="1.8"/>
<polygon points="208.5,609 208.5,603.3 225.5,587.3 225.5,593" fill="#FF0000" stroke="#000" stroke-width="1"/>
<line x1="218.8" y1="609" x2="235.8" y2="593" stroke="#000" stroke-width="1"/>
<line x1="229.5" y1="609" x2="246.5" y2="593" stroke="#000" stroke-width="1"/>
<line x1="223.2" y1="609" x2="240.2" y2="593" stroke="#000" stroke-width="1"/>
<polygon points="226.8,609 226.8,605.4 243.8,589.4 243.8,593" fill="#FF0000" stroke="#000" stroke-width="1"/>
<line x1="247.0" y1="609" x2="264.0" y2="593" stroke="#000" stroke-width="1.8"/>
<polygon points="234.0,609 234.0,604.2 251.0,588.2 251.0,593" fill="#FF0000" stroke="#000" stroke-width="1"/>
<line x1="257.4" y1="609" x2="274.4" y2="593" stroke="#000" stroke-width="1.8"/>
<line x1="252.0" y1="609" x2="269.0" y2="593" stroke="#000" stroke-width="1.8"/>
<line x1="262.9" y1="609" x2="279.9" y2="593" stroke="#000" stroke-width="1.8"/>
<line x1="267.9" y1="609" x2="284.9" y2="593" stroke="#000" stroke-width="1"/>
<polygon points="265.8,609 265.8,606.2 282.8,590.2 282.8,593" fill="#FF0000" stroke="#000" stroke-width="1"/>
<line x1="283.3" y1="609" x2="300.3" y2="593" stroke="#000" stroke-width="1.8"/>
<line x1="278.6" y1="609" x2="295.6" y2="593" stroke="#000" stroke-width="1.8"/>
<polygon points="281.5,609 281.5,606.9 298.5,590.9 298.5,593" fill="#FF0000" stroke="#000" stroke-width="1"/>
<line x1="305.0" y1="609" x2="322.0" y2="593" stroke="#000" stroke-width="1"/>
<line x1="302.7" y1="609" x2="319.7" y2="593" stroke="#000" stroke-width="1"/>
<line x1="302.3" y1="609" x2="319.3" y2="593" stroke="#000" stroke-width="1.8"/>
<line x1="308.2" y1="609" x2="325.2" y2="593" stroke="#000" stroke-width="1"/>
<line x1="310.4" y1="609" x2="327.4" y2="593" stroke="#000" stroke-width="1"/>
<polygon points="319.3,609 319.3,606.7 336.3,590.7 336.3,593" fill="#FF0000" stroke="#000" stroke-width="1"/>
<line x1="321.9" y1="609" x2="338.9" y2="593" stroke="#000" stroke-width="1.8"/>
<line x1="329.7" y1="609" x2="346.7" y2="593" stroke="#000" stroke-width="1"/>
<line x1="350.7" y1="609" x2="367.7" y2="593" stroke="#000" stroke-width="1"/>
<line x1="343.4" y1="609" x2="360.4" y2="593" stroke="#000" stroke-width="1.8"/>
<line x1="342.5" y1="609" x2="359.5" y2="593" stroke="#000" stroke-width="1.8"/>
<line x1="338.1" y1="609" x2="355.1" y2="593" stroke="#000" stroke-width="1.8"/>
<polygon points="337.6,609 337.6,606.6 354.6,590.6 354.6,593" fill="#FF0000" stroke="#000" stroke-width="1"/>
<line x1="353.0" y1="609" x2="370.0" y2="593" stroke="#000" stroke-width="1"/>
<line x1="352.9" y1="609" x2="369.9" y2="593" stroke="#000" stroke-width="1"/>
<polygon points="365.4,609 365.4,604.7 382.4,588.7 382.4,593" fill="#FF0000" stroke="#000" stroke-width="1"/>
<line x1="379.1" y1="609" x2="396.1" y2="593" stroke="#000" stroke-width="1.8"/>
<polygon points="369.9,609 369.9,605.9 386.9,589.9 386.9,593" fill="#FF0000" stroke="#000" stroke-width="1"/>
<line x1="388.0" y1="609" x2="405.0" y2="593" stroke="#000" stroke-width="1"/>
<line x1="393.6" y1="609" x2="410.6" y2="593" stroke="#000" stroke-width="1.8"/>
<polygon points="385.6,609 385.6,606.9 402.6,590.9 402.6,593" fill="#FF0000" stroke="#000" stroke-width="1"/>
<line x1="406.8" y1="609" x2="423.8" y2="593" stroke="#000" stroke-width="1.8"/>
<line x1="408.1" y1="609" x2="425.1" y2="593" stroke="#000" stroke-width="1"/>
<polygon points="398.8,609 398.8,603.2 415.8,587.2 415.8,593" fill="#FF0000" stroke="#000" stroke-width="1"/>
<line x1="412.8" y1="609" x2="429.8" y2="593" stroke="#000" stroke-width="1"/>
<line x1="421.8" y1="609" x2="438.8" y2="593" stroke="#000" stroke-width="1"/>
<line x1="435.7" y1="609" x2="452.7" y2="593" stroke="#000" stroke-width="1"/>
<polygon points="438.8,609 438.8,605.9 455.8,589.9 455.8,593" fill="#FF0000" stroke="#000" stroke-width="1"/>
<line x1="448.1" y1="609" x2="465.1" y2="593" stroke="#000" stroke-width="1"/>
<line x1="449.6" y1="609" x2="466.6" y2="593" stroke="#000" stroke-width="1"/>
<line x1="466.0" y1="609" x2="483.0" y2="593" stroke="#000" stroke-width="1"/>
<line x1="458.0" y1="609" x2="475.0" y2="593" stroke="#000" stroke-width="1.8"/>
<line x1="460.3" y1="609" x2="477.3" y2="593" stroke="#000" stroke-width="1"/>
<line x1="476.8" y1="609" x2="493.8" y2="593" stroke="#000" stroke-width="1"/>
<line x1="480.0" y1="609" x2="497.0" y2="593" stroke="#000" stroke-width="1"/>
<polygon points="483.7,609 483.7,603.1 500.7,587.1 500.7,593" fill="#FF0000" stroke="#000" stroke-width="1"/>
<line x1="485.8" y1="609" x2="502.8" y2="593" stroke="#000" stroke-width="1"/>
<line x1="488.0" y1="609" x2="505.0" y2="593" stroke="#000" stroke-width="1"/>
<polygon points="491.7,609 491.7,603.1 508.7,587.1 508.7,593" fill="#FF0000" stroke="#000" stroke-width="1"/>
<line x1="511.8" y1="609" x2="528.8" y2="593" stroke="#000" stroke-width="1.8"/>
<line x1="512.9" y1="609" x2="529.9" y2="593" stroke="#000" stroke-width="1"/>
<line x1="511.2" y1="609" x2="528.2" y2="593" stroke="#000" stroke-width="1"/>
<line x1="511.8" y1="609" x2="528.8" y2="593" stroke="#000" stroke-width="1"/>
<line x1="521.3" y1="609" x2="538.3" y2="593" stroke="#000" stroke-width="1"/>
<line x1="520.6" y1="609" x2="537.6" y2="593" stroke="#000" stroke-width="1"/>
<polygon points="528.2,609 528.2,604.3 545.2,588.3 545.2,593" fill="#FF0000" stroke="#000" stroke-width="1"/>
<line x1="534.9" y1="609" x2="551.9" y2="593" stroke="#000" stroke-width="1"/>
<line x1="539.7" y1="609" x2="556.7" y2="593" stroke="#000" stroke-width="1"/>
<line x1="543.7" y1="609" x2="560.7" y2="593" stroke="#000" stroke-width="1"/>
<polygon points="542.4,609 542.4,603.9 559.4,587.9 559.4,593" fill="#FF0000" stroke="#000" stroke-width="1"/>
<line x1="552.9" y1="609" x2="569.9" y2="593" stroke="#000" stroke-width="1.8"/>
<line x1="553.5" y1="609" x2="570.5" y2="593" stroke="#000" stroke-width="1"/>
<polygon points="551.9,609 551.9,607.4 568.9,591.4 568.9,593" fill="#FF0000" stroke="#000" stroke-width="1"/>
<line x1="566.4" y1="609" x2="583.4" y2="593" stroke="#000" stroke-width="1"/>
<polygon points="571.5,609 571.5,603.8 588.5,587.8 588.5,593" fill="#FF0000" stroke="#000" stroke-width="1"/>
<line x1="573.8" y1="609" x2="590.8" y2="593" stroke="#000" stroke-width="1"/>
<line x1="577.7" y1="609" x2="594.7" y2="593" stroke="#000" stroke-width="1"/>
<polygon points="578.2,609 578.2,605.1 595.2,589.1 595.2,593" fill="#FF0000" stroke="#000" stroke-width="1"/>
<line x1="589.1" y1="609" x2="606.1" y2="593" stroke="#000" stroke-width="1"/>
<polygon points="600.3,609 600.3,605.2 617.3,589.2 617.3,593" fill="#FF0000" stroke="#000" stroke-width="1"/>
<line x1="633.5" y1="609" x2="650.5" y2="593" stroke="#000" stroke-width="1.8"/>
<line x1="644.2" y1="609" x2="661.2" y2="593" stroke="#000" stroke-width="1"/>
<line x1="645.7" y1="609" x2="662.7" y2="593" stroke="#000" stroke-width="1"/>
<line x1="636.3" y1="609" x2="653.3" y2="593" stroke="#000" stroke-width="1"/>
<polygon points="634.0,609 634.0,605.5 651.0,589.5 651.0,593" fill="#FF0000" stroke="#000" stroke-width="1"/>
<line x1="658.6" y1="609" x2="675.6" y2="593" stroke="#000" stroke-width="1"/>
<polygon points="656.5,609 656.5,605.2 673.5,589.2 673.5,593" fill="#FF0000" stroke="#000" stroke-width="1"/>
<line x1="665.2" y1="609" x2="682.2" y2="593" stroke="#000" stroke-width="1"/>
<line x1="668.9" y1="609" x2="685.9" y2="593" stroke="#000" stroke-width="1.8"/>
<line x1="669.7" y1="609" x2="686.7" y2="593" stroke="#000" stroke-width="1"/>
<line x1="672.5" y1="609" x2="689.5" y2="593" stroke="#000" stroke-width="1"/>
<line x1="689.4" y1="609" x2="706.4" y2="593" stroke="#000" stroke-width="1"/>
<line x1="683.2" y1="609" x2="700.2" y2="593" stroke="#000" stroke-width="1.8"/>
<polygon points="678.1,609 678.1,606.4 695.1,590.4 695.1,593" fill="#FF0000" stroke="#000" stroke-width="1"/>
<line x1="694.9" y1="609" x2="711.9" y2="593" stroke="#000" stroke-width="1"/>
<polygon points="705.1,609 705.1,606.8 722.1,590.8 722.1,593" fill="#FF0000" stroke="#000" stroke-width="1"/>
<line x1="708.7" y1="609" x2="725.7" y2="593" stroke="#000" stroke-width="1"/>
<line x1="720.9" y1="609" x2="737.9" y2="593" stroke="#000" stroke-width="1"/>
<polygon points="708.0,609 708.0,603.5 725.0,587.5 725.0,593" fill="#FF0000" stroke="#000" stroke-width="1"/>
<line x1="736.1" y1="609" x2="753.1" y2="593" stroke="#000" stroke-width="1"/>
<line x1="723.8" y1="609" x2="740.8" y2="593" stroke="#000" stroke-width="1.8"/>
<line x1="741.2" y1="609" x2="758.2" y2="593" stroke="#000" stroke-width="1"/>
<line x1="741.5" y1="609" x2="758.5" y2="593" stroke="#000" stroke-width="1"/>
<line x1="746.9" y1="609" x2="763.9" y2="593" stroke="#000" stroke-width="1"/>
<polygon points="743.0,609 743.0,604.3 760.0,588.3 760.0,593" fill="#FF0000" stroke="#000" stroke-width="1"/>
<line x1="755.9" y1="609" x2="772.9" y2="593" stroke="#000" stroke-width="1"/>
<line x1="758.6" y1="609" x2="775.6" y2="593" stroke="#000" stroke-width="1"/>
<line x1="752.7" y1="609" x2="769.7" y2="593" stroke="#000" stroke-width="1"/>
<line x1="767.0" y1="609" x2="784.0" y2="593" stroke="#000" stroke-width="1"/>
<polygon points="777.3,609 777.3,606.3 794.3,590.3 794.3,593" fill="#FF0000" stroke="#000" stroke-width="1"/>
<line x1="792.7" y1="609" x2="809.7" y2="593" stroke="#000" stroke-width="1"/>
<line x1="786.6" y1="609" x2="803.6" y2="593" stroke="#000" stroke-width="1.8"/>
<polygon points="781.9,609 781.9,607.2 798.9,591.2 798.9,593" fill="#FF0000" stroke="#000" stroke-width="1"/>
<line x1="801.7" y1="609" x2="818.7" y2="593" stroke="#000" stroke-width="1"/>
<line x1="799.4" y1="609" x2="816.4" y2="593" stroke="#000" stroke-width="1"/>
<polygon points="807.3,609 807.3,607.1 824.3,591.1 824.3,593" fill="#FF0000" stroke="#000" stroke-width="1"/>
<line x1="811.2" y1="609" x2="828.2" y2="593" stroke="#000" stroke-width="1"/>
<line x1="816.9" y1="609" x2="833.9" y2="593" stroke="#000" stroke-width="1"/>
<line x1="838.7" y1="609" x2="855.7" y2="593" stroke="#000" stroke-width="1"/>
<line x1="834.2" y1="609" x2="851.2" y2="593" stroke="#000" stroke-width="1"/>
<line x1="832.8" y1="609" x2="849.8" y2="593" stroke="#000" stroke-width="1"/>
<line x1="843.7" y1="609" x2="860.7" y2="593" stroke="#000" stroke-width="1"/>
<line x1="842.8" y1="609" x2="859.8" y2="593" stroke="#000" stroke-width="1"/>
<polygon points="847.7,609 847.7,606.6 864.7,590.6 864.7,593" fill="#FF0000" stroke="#000" stroke-width="1"/>
<line x1="862.0" y1="609" x2="879.0" y2="593" stroke="#000" stroke-width="1"/>
<line x1="858.6" y1="609" x2="875.6" y2="593" stroke="#000" stroke-width="1"/>
<line x1="869.3" y1="609" x2="886.3" y2="593" stroke="#000" stroke-width="1"/>
<polygon points="865.4,609 865.4,605.0 882.4,589.0 882.4,593" fill="#FF0000" stroke="#000" stroke-width="1"/>
<line x1="877.0" y1="609" x2="894.0" y2="593" stroke="#000" stroke-width="1"/>
<line x1="883.2" y1="609" x2="900.2" y2="593" stroke="#000" stroke-width="1"/>
<polygon points="879.0,609 879.0,604.5 896.0,588.5 896.0,593" fill="#FF0000" stroke="#000" stroke-width="1"/>
<line x1="896.6" y1="609" x2="913.6" y2="593" stroke="#000" stroke-width="1.8"/>
<line x1="898.6" y1="609" x2="915.6" y2="593" stroke="#000" stroke-width="1"/>
<line x1="894.4" y1="609" x2="911.4" y2="593" stroke="#000" stroke-width="1"/>
<line x1="889.3" y1="609" x2="906.3" y2="593" stroke="#000" stroke-width="1"/>
<polygon points="889.3,609 889.3,607.3 906.3,591.3 906.3,593" fill="#FF0000" stroke="#000" stroke-width="1"/>
<line x1="899.2" y1="609" x2="916.2" y2="593" stroke="#000" stroke-width="1"/>
<line x1="905.4" y1="609" x2="922.4" y2="593" stroke="#000" stroke-width="1"/>
<polygon points="911.5,609 911.5,603.6 928.5,587.6 928.5,593" fill="#FF0000" stroke="#000" stroke-width="1"/>
<line x1="922.7" y1="609" x2="939.7" y2="593" stroke="#000" stroke-width="1"/>
<line x1="914.5" y1="609" x2="931.5" y2="593" stroke="#000" stroke-width="1"/>
<polygon points="920.4,609 920.4,606.3 937.4,590.3 937.4,593" fill="#FF0000" stroke="#000" stroke-width="1"/>
<line x1="943.0" y1="609" x2="960.0" y2="593" stroke="#000" stroke-width="1"/>
<line x1="932.2" y1="609" x2="949.2" y2="593" stroke="#000" stroke-width="1"/>
<polygon points="931.3,609 931.3,606.0 948.3,590.0 948.3,593" fill="#FF0000" stroke="#000" stroke-width="1"/>
<line x1="950.4" y1="609" x2="967.4" y2="593" stroke="#000" stroke-width="1"/>
<polygon points="954.9,609 954.9,607.1 971.9,591.1 971.9,593" fill="#FF0000" stroke="#000" stroke-width="1"/>
<line x1="960.3" y1="609" x2="977.3" y2="593" stroke="#000" stroke-width="1"/>
<polygon points="962.6,609 962.6,604.7 979.6,588.7 979.6,593" fill="#FF0000" stroke="#000" stroke-width="1"/>
<line x1="981.7" y1="609" x2="998.7" y2="593" stroke="#000" stroke-width="1"/>
<polygon points="983.6,609 983.6,603.5 1000.6,587.5 1000.6,593" fill="#FF0000" stroke="#000" stroke-width="1"/>
<line x1="999.1" y1="609" x2="1016.1" y2="593" stroke="#000" stroke-width="1.8"/>
<line x1="990.0" y1="609" x2="1007.0" y2="593" stroke="#000" stroke-width="1"/>
<line x1="988.4" y1="609" x2="1005.4" y2="593" stroke="#000" stroke-width="1.8"/>
<polygon points="999.8,609 999.8,606.9 1016.8,590.9 1016.8,593" fill="#FF0000" stroke="#000" stroke-width="1"/>
<line x1="1002.8" y1="609" x2="1019.8" y2="593" stroke="#000" stroke-width="1"/>
<polygon points="1003.2,609 1003.2,604.6 1020.2,588.6 1020.2,593" fill="#FF0000" stroke="#000" stroke-width="1"/>
<polygon points="1018.2,609 1018.2,607.4 1035.2,591.4 1035.2,593" fill="#FF0000" stroke="#000" stroke-width="1"/>
<line x1="1042.3" y1="609" x2="1059.3" y2="593" stroke="#000" stroke-width="1.8"/>
<line x1="1048.4" y1="609" x2="1065.4" y2="593" stroke="#000" stroke-width="1"/>
<line x1="1058.0" y1="609" x2="1075.0" y2="593" stroke="#000" stroke-width="1.8"/>
<line x1="1050.7" y1="609" x2="1067.7" y2="593" stroke="#000" stroke-width="1"/>
<line x1="1059.5" y1="609" x2="1076.5" y2="593" stroke="#000" stroke-width="1"/>
<polygon points="1050.0,609 1050.0,604.2 1067.0,588.2 1067.0,593" fill="#FF0000" stroke="#000" stroke-width="1"/>
<polygon points="178.7,609 178.7,598.0 195.7,582.0 195.7,593" fill="#FF0000" stroke="#000" stroke-width="1" stroke-linejoin="bevel"/>
<line x1="178.7" y1="609" x2="195.7" y2="593" stroke="#000" stroke-width="1"/>
<polygon points="256.4,609 256.4,598.0 273.4,582.0 273.4,593" fill="#FF0000" stroke="#000" stroke-width="1" stroke-linejoin="bevel"/>
<line x1="256.4" y1="609" x2="273.4" y2="593" stroke="#000" stroke-width="1"/>
<polygon points="280.3,609 280.3,551.0 297.3,535.0 297.3,593" fill="#FF0000" stroke="#000" stroke-width="1" stroke-linejoin="bevel"/>
<line x1="280.3" y1="609" x2="297.3" y2="593" stroke="#000" stroke-width="1"/>
<polygon points="298.3,609 298.3,574.4 315.3,558.4 315.3,593" fill="#FF0000" stroke="#000" stroke-width="1" stroke-linejoin="bevel"/>
<line x1="298.3" y1="609" x2="315.3" y2="593" stroke="#000" stroke-width="1"/>
<polygon points="323.0,609 323.0,604.0 340.0,588.0 340.0,593" fill="#FF0000" stroke="#000" stroke-width="1" stroke-linejoin="bevel"/>
<line x1="323.0" y1="609" x2="340.0" y2="593" stroke="#000" stroke-width="1"/>
<polygon points="348.5,609 348.5,578.0 365.5,562.0 372.0,593 355.0,609" fill="#FF0000" stroke="#000" stroke-width="1" stroke-linejoin="bevel"/>
<line x1="348.5" y1="609" x2="365.5" y2="593" stroke="#000" stroke-width="1"/>
<polygon points="415.0,609 415.0,580.6 432.0,564.6 432.0,593" fill="#FF0000" stroke="#000" stroke-width="1" stroke-linejoin="bevel"/>
<line x1="415.0" y1="609" x2="432.0" y2="593" stroke="#000" stroke-width="1"/>
<polygon points="449.0,609 449.0,567.8 466.0,551.8 466.0,593" fill="#FF0000" stroke="#000" stroke-width="1" stroke-linejoin="bevel"/>
<line x1="449.0" y1="609" x2="466.0" y2="593" stroke="#000" stroke-width="1"/>
<polygon points="499.0,609 499.0,598.0 516.0,582.0 516.0,593" fill="#FF0000" stroke="#000" stroke-width="1" stroke-linejoin="bevel"/>
<line x1="499.0" y1="609" x2="516.0" y2="593" stroke="#000" stroke-width="1"/>
<polygon points="517.0,609 517.0,574.4 534.0,558.4 534.0,593" fill="#FF0000" stroke="#000" stroke-width="1" stroke-linejoin="bevel"/>
<line x1="517.0" y1="609" x2="534.0" y2="593" stroke="#000" stroke-width="1"/>
<polygon points="636.2,609 636.2,559.6 653.2,543.6 666.3,593 649.3,609" fill="#FF0000" stroke="#000" stroke-width="1" stroke-linejoin="bevel"/>
<line x1="636.2" y1="609" x2="653.2" y2="593" stroke="#000" stroke-width="1"/>
<polygon points="678.0,609 678.0,540.0 695.0,524.0 695.0,593" fill="#FF0000" stroke="#000" stroke-width="1" stroke-linejoin="bevel"/>
<line x1="678.0" y1="609" x2="695.0" y2="593" stroke="#000" stroke-width="1"/>
<polygon points="686.6,609 686.6,471.6 703.6,455.6 703.6,593" fill="#FF0000" stroke="#000" stroke-width="1" stroke-linejoin="bevel"/>
<line x1="686.6" y1="609" x2="703.6" y2="593" stroke="#000" stroke-width="1"/>
<polygon points="703.3,609 703.3,547.3 720.3,531.3 720.3,593" fill="#FF0000" stroke="#000" stroke-width="1" stroke-linejoin="bevel"/>
<line x1="703.3" y1="609" x2="720.3" y2="593" stroke="#000" stroke-width="1"/>
<polygon points="712.0,609 712.0,588.0 729.0,572.0 729.0,593" fill="#FF0000" stroke="#000" stroke-width="1" stroke-linejoin="bevel"/>
<line x1="712.0" y1="609" x2="729.0" y2="593" stroke="#000" stroke-width="1"/>
<polygon points="745.8,609 745.8,579.4 762.8,563.4 762.8,593" fill="#FF0000" stroke="#000" stroke-width="1" stroke-linejoin="bevel"/>
<line x1="745.8" y1="609" x2="762.8" y2="593" stroke="#000" stroke-width="1"/>
<polygon points="753.6,609 753.6,593.0 770.6,577.0 770.6,593" fill="#FF0000" stroke="#000" stroke-width="1" stroke-linejoin="bevel"/>
<line x1="753.6" y1="609" x2="770.6" y2="593" stroke="#000" stroke-width="1"/>
<polygon points="770.4,609 770.4,577.0 787.4,561.0 787.4,593" fill="#FF0000" stroke="#000" stroke-width="1" stroke-linejoin="bevel"/>
<line x1="770.4" y1="609" x2="787.4" y2="593" stroke="#000" stroke-width="1"/>
<polygon points="776.7,609 776.7,594.0 793.7,578.0 793.7,593" fill="#FF0000" stroke="#000" stroke-width="1" stroke-linejoin="bevel"/>
<line x1="776.7" y1="609" x2="793.7" y2="593" stroke="#000" stroke-width="1"/>
<polygon points="821.8,609 821.8,599.0 838.8,583.0 838.8,593" fill="#FF0000" stroke="#000" stroke-width="1" stroke-linejoin="bevel"/>
<line x1="821.8" y1="609" x2="838.8" y2="593" stroke="#000" stroke-width="1"/>
<polygon points="804.5,609 804.5,590.5 821.5,574.5 821.5,593" fill="#FF0000" stroke="#000" stroke-width="1" stroke-linejoin="bevel"/>
<line x1="804.5" y1="609" x2="821.5" y2="593" stroke="#000" stroke-width="1"/>
<polygon points="829.0,609 829.0,496.2 846.0,480.2 846.0,593" fill="#FF0000" stroke="#000" stroke-width="1" stroke-linejoin="bevel"/>
<line x1="829.0" y1="609" x2="846.0" y2="593" stroke="#000" stroke-width="1"/>
<polygon points="854.2,609 854.2,588.0 871.2,572.0 871.2,593" fill="#FF0000" stroke="#000" stroke-width="1" stroke-linejoin="bevel"/>
<line x1="854.2" y1="609" x2="871.2" y2="593" stroke="#000" stroke-width="1"/>
<polygon points="862.0,609 862.0,590.0 879.0,574.0 879.0,593" fill="#FF0000" stroke="#000" stroke-width="1" stroke-linejoin="bevel"/>
<line x1="862.0" y1="609" x2="879.0" y2="593" stroke="#000" stroke-width="1"/>
<polygon points="879.3,609 879.3,589.0 896.3,573.0 896.3,593" fill="#FF0000" stroke="#000" stroke-width="1" stroke-linejoin="bevel"/>
<line x1="879.3" y1="609" x2="896.3" y2="593" stroke="#000" stroke-width="1"/>
<polygon points="888.5,609 888.5,589.5 905.5,573.5 905.5,593" fill="#FF0000" stroke="#000" stroke-width="1" stroke-linejoin="bevel"/>
<line x1="888.5" y1="609" x2="905.5" y2="593" stroke="#000" stroke-width="1"/>
<polygon points="897.6,609 897.6,600.0 914.6,584.0 914.6,593" fill="#FF0000" stroke="#000" stroke-width="1" stroke-linejoin="bevel"/>
<line x1="897.6" y1="609" x2="914.6" y2="593" stroke="#000" stroke-width="1"/>
<polygon points="913.4,609 913.4,515.2 930.4,499.2 930.4,593" fill="#FF0000" stroke="#000" stroke-width="1" stroke-linejoin="bevel"/>
<line x1="913.4" y1="609" x2="930.4" y2="593" stroke="#000" stroke-width="1"/>
<polygon points="922.5,609 922.5,572.0 939.5,556.0 939.5,593" fill="#FF0000" stroke="#000" stroke-width="1" stroke-linejoin="bevel"/>
<line x1="922.5" y1="609" x2="939.5" y2="593" stroke="#000" stroke-width="1"/>
<polygon points="931.0,609 931.0,588.0 948.0,572.0 948.0,593" fill="#FF0000" stroke="#000" stroke-width="1" stroke-linejoin="bevel"/>
<line x1="931.0" y1="609" x2="948.0" y2="593" stroke="#000" stroke-width="1"/>
<polygon points="938.5,609 938.5,585.0 955.5,569.0 963.2,593 946.2,609" fill="#FF0000" stroke="#000" stroke-width="1" stroke-linejoin="bevel"/>
<line x1="938.5" y1="609" x2="955.5" y2="593" stroke="#000" stroke-width="1"/>
<polygon points="972.6,609 972.6,586.8 989.6,570.8 989.6,593" fill="#FF0000" stroke="#000" stroke-width="1" stroke-linejoin="bevel"/>
<line x1="972.6" y1="609" x2="989.6" y2="593" stroke="#000" stroke-width="1"/>
<polygon points="981.7,609 981.7,592.0 998.7,576.0 998.7,593" fill="#FF0000" stroke="#000" stroke-width="1" stroke-linejoin="bevel"/>
<line x1="981.7" y1="609" x2="998.7" y2="593" stroke="#000" stroke-width="1"/>
<polygon points="1007.0,609 1007.0,581.8 1024.0,565.8 1024.0,593" fill="#FF0000" stroke="#000" stroke-width="1" stroke-linejoin="bevel"/>
<line x1="1007.0" y1="609" x2="1024.0" y2="593" stroke="#000" stroke-width="1"/>
<polygon points="1044,609 1061,593 1067,576 1075,565 1083,559 1082,593 1066,609" fill="#FF0000" stroke="none"/>
<polygon points="1044,609 1050,592 1058,581 1066,575 1066,609" fill="#FF0000" stroke="#000" stroke-width="1"/>
<polyline points="1061,593 1067,576 1075,565 1083,559" fill="none" stroke="#000" stroke-width="1"/>
<line x1="1050" y1="592" x2="1067" y2="576" stroke="#000" stroke-width="1"/>
<line x1="1050.5" y1="592" x2="1050.5" y2="609" stroke="#000" stroke-width="1"/>
<line x1="1058" y1="581" x2="1075" y2="565" stroke="#000" stroke-width="1"/>
<line x1="1058.5" y1="581" x2="1058.5" y2="609" stroke="#000" stroke-width="1"/>
<line x1="1066" y1="575" x2="1083" y2="559" stroke="#000" stroke-width="1"/>
<line x1="1066.5" y1="575" x2="1066.5" y2="609" stroke="#000" stroke-width="1"/>
<polygon points="1066,575 1082,558 1082,593 1066,609" fill="#FF0000" stroke="#000" stroke-width="1"/>
<line x1="84" y1="609" x2="1067" y2="609" stroke="#000" stroke-width="2"/>
<line x1="85.3" y1="610" x2="85.3" y2="614" stroke="#808080" stroke-width="1"/>
<line x1="100.1" y1="610" x2="100.1" y2="614" stroke="#808080" stroke-width="1"/>
<line x1="114.9" y1="610" x2="114.9" y2="614" stroke="#808080" stroke-width="1"/>
<line x1="129.7" y1="610" x2="129.7" y2="614" stroke="#808080" stroke-width="1"/>
<line x1="144.5" y1="610" x2="144.5" y2="614" stroke="#808080" stroke-width="1"/>
<line x1="159.3" y1="610" x2="159.3" y2="614" stroke="#808080" stroke-width="1"/>
<line x1="174.1" y1="610" x2="174.1" y2="614" stroke="#808080" stroke-width="1"/>
<line x1="188.9" y1="610" x2="188.9" y2="614" stroke="#808080" stroke-width="1"/>
<line x1="203.7" y1="610" x2="203.7" y2="614" stroke="#808080" stroke-width="1"/>
<line x1="218.5" y1="610" x2="218.5" y2="614" stroke="#808080" stroke-width="1"/>
<line x1="233.3" y1="610" x2="233.3" y2="614" stroke="#808080" stroke-width="1"/>
<line x1="248.1" y1="610" x2="248.1" y2="614" stroke="#808080" stroke-width="1"/>
<line x1="262.9" y1="610" x2="262.9" y2="614" stroke="#808080" stroke-width="1"/>
<line x1="277.7" y1="610" x2="277.7" y2="614" stroke="#808080" stroke-width="1"/>
<line x1="292.5" y1="610" x2="292.5" y2="614" stroke="#808080" stroke-width="1"/>
<line x1="307.3" y1="610" x2="307.3" y2="614" stroke="#808080" stroke-width="1"/>
<line x1="322.1" y1="610" x2="322.1" y2="614" stroke="#808080" stroke-width="1"/>
<line x1="336.9" y1="610" x2="336.9" y2="614" stroke="#808080" stroke-width="1"/>
<line x1="351.7" y1="610" x2="351.7" y2="614" stroke="#808080" stroke-width="1"/>
<line x1="366.5" y1="610" x2="366.5" y2="614" stroke="#808080" stroke-width="1"/>
<line x1="381.3" y1="610" x2="381.3" y2="614" stroke="#808080" stroke-width="1"/>
<line x1="396.1" y1="610" x2="396.1" y2="614" stroke="#808080" stroke-width="1"/>
<line x1="410.9" y1="610" x2="410.9" y2="614" stroke="#808080" stroke-width="1"/>
<line x1="425.7" y1="610" x2="425.7" y2="614" stroke="#808080" stroke-width="1"/>
<line x1="440.5" y1="610" x2="440.5" y2="614" stroke="#808080" stroke-width="1"/>
<line x1="455.3" y1="610" x2="455.3" y2="614" stroke="#808080" stroke-width="1"/>
<line x1="470.1" y1="610" x2="470.1" y2="614" stroke="#808080" stroke-width="1"/>
<line x1="484.9" y1="610" x2="484.9" y2="614" stroke="#808080" stroke-width="1"/>
<line x1="499.7" y1="610" x2="499.7" y2="614" stroke="#808080" stroke-width="1"/>
<line x1="514.5" y1="610" x2="514.5" y2="614" stroke="#808080" stroke-width="1"/>
<line x1="529.3" y1="610" x2="529.3" y2="614" stroke="#808080" stroke-width="1"/>
<line x1="544.1" y1="610" x2="544.1" y2="614" stroke="#808080" stroke-width="1"/>
<line x1="558.9" y1="610" x2="558.9" y2="614" stroke="#808080" stroke-width="1"/>
<line x1="573.7" y1="610" x2="573.7" y2="614" stroke="#808080" stroke-width="1"/>
<line x1="588.5" y1="610" x2="588.5" y2="614" stroke="#808080" stroke-width="1"/>
<line x1="603.3" y1="610" x2="603.3" y2="614" stroke="#808080" stroke-width="1"/>
<line x1="618.1" y1="610" x2="618.1" y2="614" stroke="#808080" stroke-width="1"/>
<line x1="632.9" y1="610" x2="632.9" y2="614" stroke="#808080" stroke-width="1"/>
<line x1="647.7" y1="610" x2="647.7" y2="614" stroke="#808080" stroke-width="1"/>
<line x1="662.5" y1="610" x2="662.5" y2="614" stroke="#808080" stroke-width="1"/>
<line x1="677.3" y1="610" x2="677.3" y2="614" stroke="#808080" stroke-width="1"/>
<line x1="692.1" y1="610" x2="692.1" y2="614" stroke="#808080" stroke-width="1"/>
<line x1="706.9" y1="610" x2="706.9" y2="614" stroke="#808080" stroke-width="1"/>
<line x1="721.7" y1="610" x2="721.7" y2="614" stroke="#808080" stroke-width="1"/>
<line x1="736.5" y1="610" x2="736.5" y2="614" stroke="#808080" stroke-width="1"/>
<line x1="751.3" y1="610" x2="751.3" y2="614" stroke="#808080" stroke-width="1"/>
<line x1="766.1" y1="610" x2="766.1" y2="614" stroke="#808080" stroke-width="1"/>
<line x1="780.9" y1="610" x2="780.9" y2="614" stroke="#808080" stroke-width="1"/>
<line x1="795.7" y1="610" x2="795.7" y2="614" stroke="#808080" stroke-width="1"/>
<line x1="810.5" y1="610" x2="810.5" y2="614" stroke="#808080" stroke-width="1"/>
<line x1="825.3" y1="610" x2="825.3" y2="614" stroke="#808080" stroke-width="1"/>
<line x1="840.1" y1="610" x2="840.1" y2="614" stroke="#808080" stroke-width="1"/>
<line x1="854.9" y1="610" x2="854.9" y2="614" stroke="#808080" stroke-width="1"/>
<line x1="869.7" y1="610" x2="869.7" y2="614" stroke="#808080" stroke-width="1"/>
<line x1="884.5" y1="610" x2="884.5" y2="614" stroke="#808080" stroke-width="1"/>
<line x1="899.3" y1="610" x2="899.3" y2="614" stroke="#808080" stroke-width="1"/>
<line x1="914.1" y1="610" x2="914.1" y2="614" stroke="#808080" stroke-width="1"/>
<line x1="928.9" y1="610" x2="928.9" y2="614" stroke="#808080" stroke-width="1"/>
<line x1="943.7" y1="610" x2="943.7" y2="614" stroke="#808080" stroke-width="1"/>
<line x1="958.5" y1="610" x2="958.5" y2="614" stroke="#808080" stroke-width="1"/>
<line x1="973.3" y1="610" x2="973.3" y2="614" stroke="#808080" stroke-width="1"/>
<line x1="988.1" y1="610" x2="988.1" y2="614" stroke="#808080" stroke-width="1"/>
<line x1="1002.9" y1="610" x2="1002.9" y2="614" stroke="#808080" stroke-width="1"/>
<line x1="1017.7" y1="610" x2="1017.7" y2="614" stroke="#808080" stroke-width="1"/>
<line x1="1032.5" y1="610" x2="1032.5" y2="614" stroke="#808080" stroke-width="1"/>
<line x1="1047.3" y1="610" x2="1047.3" y2="614" stroke="#808080" stroke-width="1"/>
<line x1="1062.1" y1="610" x2="1062.1" y2="614" stroke="#808080" stroke-width="1"/>
<text x="84.6" y="626" text-anchor="middle" font-size="11" font-family="Liberation Sans">100 (817)</text>
<text x="143.8" y="626" text-anchor="middle" font-size="11" font-family="Liberation Sans">0,96 (8)</text>
<text x="202.9" y="626" text-anchor="middle" font-size="11" font-family="Liberation Sans">7,21 (58)</text>
<text x="262.0" y="626" text-anchor="middle" font-size="11" font-family="Liberation Sans">36,5 (300)</text>
<text x="321.2" y="626" text-anchor="middle" font-size="11" font-family="Liberation Sans">0,27 (2)</text>
<text x="380.4" y="626" text-anchor="middle" font-size="11" font-family="Liberation Sans">34,65 (280)</text>
<text x="439.5" y="626" text-anchor="middle" font-size="11" font-family="Liberation Sans">1,53 (12)</text>
<text x="498.6" y="626" text-anchor="middle" font-size="11" font-family="Liberation Sans">0,19 (2)</text>
<text x="557.8" y="626" text-anchor="middle" font-size="11" font-family="Liberation Sans">7,52 (60)</text>
<text x="617.0" y="626" text-anchor="middle" font-size="11" font-family="Liberation Sans">86,96 (700)</text>
<text x="676.1" y="626" text-anchor="middle" font-size="11" font-family="Liberation Sans">20 (161)</text>
<text x="735.2" y="626" text-anchor="middle" font-size="11" font-family="Liberation Sans">7,34 (60)</text>
<text x="794.4" y="626" text-anchor="middle" font-size="11" font-family="Liberation Sans">7,33 (60)</text>
<text x="853.5" y="626" text-anchor="middle" font-size="11" font-family="Liberation Sans">7,42 (60)</text>
<text x="912.7" y="626" text-anchor="middle" font-size="11" font-family="Liberation Sans">42,96 (348)</text>
<text x="971.9" y="626" text-anchor="middle" font-size="11" font-family="Liberation Sans">2,99 (24)</text>
<text x="1031.0" y="626" text-anchor="middle" font-size="11" font-family="Liberation Sans">26,09 (210)</text>
<text x="562" y="447" text-anchor="middle" font-size="10" font-family="Liberation Sans" fill="#0000FF">TDBChart</text>
</svg>
<div class="a" style="left:1120px;top:451px;width:116px;height:172px;background:#000"></div>
<div class="a" style="left:1117px;top:448px;width:116px;height:172px;border:1px solid #000;background:#fff"></div>
<div class="a" style="left:1122px;top:452.0px;width:12px;height:10px;border:1px solid #000;background:#FF0000"></div>
<div class="t" style="left:1138px;top:451.0px">100 100 (817)</div>
<div class="a" style="left:1122px;top:466.1px;width:12px;height:10px;border:1px solid #000;background:#FF0000"></div>
<div class="t" style="left:1138px;top:465.1px">2,448 2,448 (20)</div>
<div class="a" style="left:1122px;top:480.2px;width:12px;height:10px;border:1px solid #000;background:#FF0000"></div>
<div class="t" style="left:1138px;top:479.2px">100 100 (817)</div>
<div class="a" style="left:1122px;top:494.3px;width:12px;height:10px;border:1px solid #000;background:#FF0000"></div>
<div class="t" style="left:1138px;top:493.3px">2,448 2,448 (20)</div>
<div class="a" style="left:1122px;top:508.4px;width:12px;height:10px;border:1px solid #000;background:#FF0000"></div>
<div class="t" style="left:1138px;top:507.4px">7,34 7,34 (60)</div>
<div class="a" style="left:1122px;top:522.5px;width:12px;height:10px;border:1px solid #000;background:#FF0000"></div>
<div class="t" style="left:1138px;top:521.5px">3,67 3,67 (30)</div>
<div class="a" style="left:1122px;top:536.6px;width:12px;height:10px;border:1px solid #000;background:#FF0000"></div>
<div class="t" style="left:1138px;top:535.6px">122,4 122,4 (1000)</div>
<div class="a" style="left:1122px;top:550.7px;width:12px;height:10px;border:1px solid #000;background:#FF0000"></div>
<div class="t" style="left:1138px;top:549.7px">18,36 18,36 (150)</div>
<div class="a" style="left:1122px;top:564.8px;width:12px;height:10px;border:1px solid #000;background:#FF0000"></div>
<div class="t" style="left:1138px;top:563.8px">3,67 3,67 (30)</div>
<div class="a" style="left:1122px;top:578.9px;width:12px;height:10px;border:1px solid #000;background:#FF0000"></div>
<div class="t" style="left:1138px;top:577.9px">9,18 9,18 (75)</div>
<div class="a" style="left:1122px;top:593.0px;width:12px;height:10px;border:1px solid #000;background:#FF0000"></div>
<div class="t" style="left:1138px;top:592.0px">4,9 4,9 (40)</div>
<div class="a" style="left:1122px;top:607.1px;width:12px;height:10px;border:1px solid #000;background:#FF0000"></div>
<div class="t" style="left:1138px;top:606.1px">4,9 4,9 (40)</div>
<!--/CHART-->

<!-- bottom panel -->
<div class="a" style="left:5px;top:637px;width:1270px;height:105px;border:1px solid #D2D2D6;border-radius:3px;background:linear-gradient(90deg,#F7F8FC,#FBFBFE 50%,#F7F8FC)"></div>
<!--BOTTOM-->
<div class="a xb" style="left:18px;top:654px;width:85px;height:23px"></div>
<div class="a xb" style="left:18px;top:678px;width:85px;height:23px"></div>
<div class="a xb" style="left:18px;top:710px;width:85px;height:23px"></div>
<div class="a xb" style="left:118px;top:654px;width:87px;height:23px"></div>
<svg class="a" style="left:18px;top:654px" width="30" height="23">
<path d="M4 9H13" stroke="#0000FF" stroke-width="2"/><path d="M10 5.5L14 9L10 12.5Z" fill="#0000FF"/>
<path d="M4 16H11M7.5 12.5V19.5" stroke="#FF0000" stroke-width="2.2"/>
<rect x="15" y="8" width="2" height="2" fill="#FF0000"/>
<rect x="16" y="5" width="3" height="2" fill="#000"/><rect x="16" y="11" width="3" height="2" fill="#000"/><rect x="16" y="14" width="3" height="2" fill="#000"/><rect x="16" y="18" width="3" height="2" fill="#000"/>
</svg>
<div class="t" style="left:42px;top:659px;font-size:12px;font-weight:bold;color:#004000;line-height:14px;-webkit-text-stroke:0.3px #004000">Добавить</div>
<svg class="a" style="left:18px;top:678px" width="30" height="23" shape-rendering="crispEdges">
<path d="M11.5 3.5H17.5L19.5 5.5V19.5H11.5Z" fill="#fff" stroke="#000" stroke-width="1"/>
<path d="M13 8H15M16 10H18M13 13H14M16 13H18M14 16H18" stroke="#000" stroke-width="1"/>
<path d="M6 2L16 14" stroke="#000" stroke-width="3" shape-rendering="auto"/>
<path d="M6 2L16 14" stroke="#FFE000" stroke-width="1.6" shape-rendering="auto"/>
<rect x="5" y="1" width="2" height="2" fill="#D00000"/>
<path d="M5.5 9.5H9.5L13.5 11.5V13.5L15.5 15.5V17.5H7.5L5.5 15.5Z" fill="#FFFF40" stroke="#000" stroke-width="1"/>
<rect x="3" y="11" width="2" height="7" fill="#30D8E8"/>
</svg>
<div class="t" style="left:42px;top:683px;font-size:12px;font-weight:bold;color:#000080;line-height:14px;-webkit-text-stroke:0.3px #000080;letter-spacing:0.2px">Изменить</div>
<svg class="a" style="left:18px;top:710px" width="30" height="23">
<path d="M9 9H18" stroke="#0000FF" stroke-width="2"/><path d="M12 5.5L8 9L12 12.5Z" fill="#0000FF"/>
<path d="M8 16H14" stroke="#FF0000" stroke-width="2.2"/>
<rect x="18" y="8" width="2" height="2" fill="#FF0000"/>
<rect x="20" y="5" width="3" height="2" fill="#000"/><rect x="20" y="11" width="3" height="2" fill="#000"/><rect x="20" y="14" width="3" height="2" fill="#000"/><rect x="20" y="18" width="3" height="2" fill="#000"/>
</svg>
<div class="t" style="left:45px;top:715px;font-size:12px;font-weight:bold;color:#800000;line-height:14px;-webkit-text-stroke:0.3px #800000">Удалить</div>
<svg class="a" style="left:118px;top:654px" width="32" height="23">
<path d="M14.5 4.5H19.5L22.5 7.5V11.5H14.5Z" fill="#fff" stroke="#000" stroke-width="1"/>
<path d="M16 7H18M16 9H21" stroke="#000" stroke-width="1"/>
<rect x="11.5" y="11.5" width="16" height="5" fill="#fff" stroke="#000" stroke-width="1"/>
<path d="M13 14H25" stroke="#888" stroke-width="1" stroke-dasharray="1,1"/>
<rect x="24" y="13" width="1.5" height="1.5" fill="#FF0000"/>
<rect x="11.5" y="16.5" width="16" height="3" fill="#C8C8C8" stroke="#000" stroke-width="1"/>
</svg>
<div class="t" style="left:151px;top:659px;font-size:12px;font-weight:bold;color:#000;line-height:14px;-webkit-text-stroke:0.3px #000">Печать</div>
<div class="a" style="left:963px;top:652px;width:310px;height:87px;border:1px solid #A0A0A4;background:#DCDFFA;overflow:hidden">
<div class="a hc" style="left:1px;top:1px;width:22px;height:18px"><span class="t" style="left:2px;top:3px">№</span></div>
<div class="a hc" style="left:23px;top:1px;width:71px;height:18px"><span class="t" style="left:2px;top:3px">Фирма</span></div>
<div class="a hc" style="left:94px;top:1px;width:53px;height:18px"><span class="t" style="left:2px;top:3px">УЕ</span></div>
<div class="a hc" style="left:147px;top:1px;width:54px;height:18px"><span class="t" style="left:2px;top:3px">ГР</span></div>
<div class="a hc" style="left:201px;top:1px;width:76px;height:18px"><span class="t" style="left:2px;top:3px">СУММА УЕ</span></div>
<div class="a" style="left:1px;top:19px;width:276px;height:18px;border-bottom:1px solid #C6C6C6">
<div class="c" style="left:0px;width:21px;text-align:right;padding-right:3px;direction:rtl"><span style="direction:ltr;unicode-bidi:bidi-override">0</span></div>
<div class="vl" style="left:21px"></div>
<div class="c" style="left:22px;width:70px;padding-left:2px">нал.</div>
<div class="vl" style="left:92px"></div>
<div class="c" style="left:93px;width:52px;text-align:right;padding-right:3px;direction:rtl"><span style="direction:ltr;unicode-bidi:bidi-override">116003,9035</span></div>
<div class="vl" style="left:145px"></div>
<div class="c" style="left:146px;width:53px;text-align:right;padding-right:3px;direction:rtl"><span style="direction:ltr;unicode-bidi:bidi-override">1232599999</span></div>
<div class="vl" style="left:199px"></div>
<div class="c" style="left:200px;width:75px;text-align:right;padding-right:3px;direction:rtl"><span style="direction:ltr;unicode-bidi:bidi-override">109044,6935</span></div>
<div class="vl" style="left:275px"></div>
</div>
<div class="a" style="left:1px;top:37px;width:276px;height:18px;border-bottom:1px solid #C6C6C6">
<div class="c" style="left:0px;width:21px;text-align:right;padding-right:3px;direction:rtl"><span style="direction:ltr;unicode-bidi:bidi-override">1</span></div>
<div class="vl" style="left:21px"></div>
<div class="c" style="left:22px;width:70px;padding-left:2px">СПД Довгополый</div>
<div class="vl" style="left:92px"></div>
<div class="c" style="left:93px;width:52px;text-align:right;padding-right:3px;direction:rtl"><span style="direction:ltr;unicode-bidi:bidi-override"></span></div>
<div class="vl" style="left:145px"></div>
<div class="c" style="left:146px;width:53px;text-align:right;padding-right:3px;direction:rtl"><span style="direction:ltr;unicode-bidi:bidi-override">2160,971</span></div>
<div class="vl" style="left:199px"></div>
<div class="c" style="left:200px;width:75px;text-align:right;padding-right:3px;direction:rtl"><span style="direction:ltr;unicode-bidi:bidi-override">265,9</span></div>
<div class="vl" style="left:275px"></div>
</div>
<div class="a" style="left:1px;top:55px;width:276px;height:18px;border-bottom:1px solid #C6C6C6">
<div class="c" style="left:0px;width:21px;text-align:right;padding-right:3px;direction:rtl"><span style="direction:ltr;unicode-bidi:bidi-override">2</span></div>
<div class="vl" style="left:21px"></div>
<div class="c" style="left:22px;width:70px;padding-left:2px">100уа Безнал</div>
<div class="vl" style="left:92px"></div>
<div class="c" style="left:93px;width:52px;text-align:right;padding-right:3px;direction:rtl"><span style="direction:ltr;unicode-bidi:bidi-override"></span></div>
<div class="vl" style="left:145px"></div>
<div class="c" style="left:146px;width:53px;text-align:right;padding-right:3px;direction:rtl"><span style="direction:ltr;unicode-bidi:bidi-override">7425,7524</span></div>
<div class="vl" style="left:199px"></div>
<div class="c" style="left:200px;width:75px;text-align:right;padding-right:3px;direction:rtl"><span style="direction:ltr;unicode-bidi:bidi-override">121961,55</span></div>
<div class="vl" style="left:275px"></div>
</div>
</div>
<div class="a" style="left:1255px;top:653px;width:17px;height:85px;background:linear-gradient(90deg,#E4EDFB,#F6F9FE 70%,#F0F4FC)"></div>
<div class="a sbb" style="left:1255px;top:654px;width:16px;height:17px"></div>
<svg class="a" style="left:1255px;top:654px" width="16" height="17"><path d="M4 10L8 6L12 10" stroke="#4D6185" stroke-width="2" fill="none"/></svg>
<div class="a sbb" style="left:1255px;top:671px;width:16px;height:17px"></div>
<svg class="a" style="left:1255px;top:671px" width="16" height="17"><path d="M5 6H11M5 8H11M5 10H11M5 12H11" stroke="#8FA6CC" stroke-width="1"/></svg>
<div class="a sbb" style="left:1255px;top:721px;width:16px;height:17px"></div>
<svg class="a" style="left:1255px;top:721px" width="16" height="17"><path d="M4 7L8 11L12 7" stroke="#4D6185" stroke-width="2" fill="none"/></svg>
<!--/BOTTOM-->

<!-- status area -->
<div class="a" style="left:0;top:744px;width:1280px;height:21px;background:linear-gradient(#E4E2E8,#E2E1E7 2px,#EEF1F6 3px)"></div>
<div class="a" style="left:1279px;top:26px;width:1px;height:739px;background:#A2A2AA"></div>
<div class="a" style="left:0;top:26px;width:1px;height:739px;background:#F8F8FA"></div>
<div class="a" style="left:0;top:765px;width:1280px;height:1px;background:#F6F7FA"></div>
<div class="a" style="left:0;top:766px;width:1280px;height:1px;background:#16281A"></div>
<div class="a" style="left:0;top:767px;width:1280px;height:3px;background:linear-gradient(#5A8CCB,#98BCE4 50%,#5F8AC6)"></div>
</body></html>
